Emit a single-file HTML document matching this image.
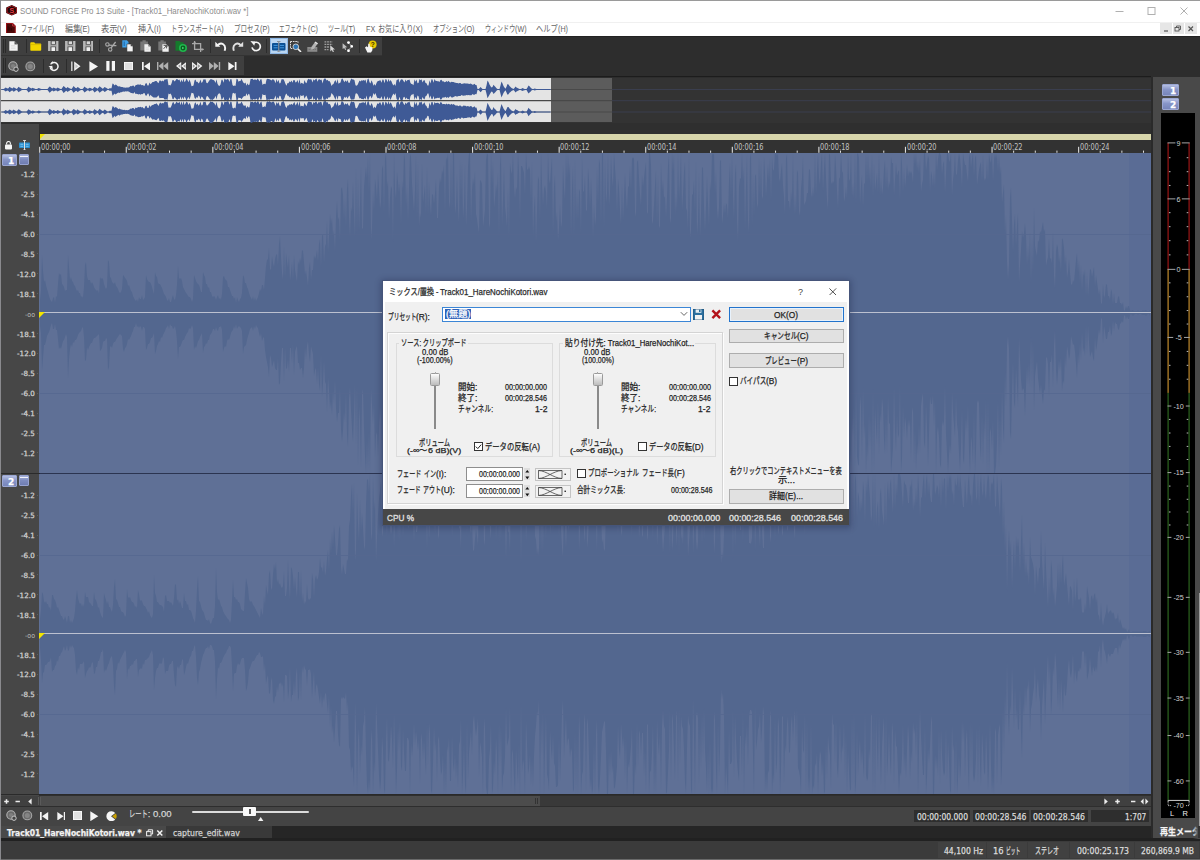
<!DOCTYPE html>
<html lang="ja"><head><meta charset="utf-8"><title>SOUND FORGE Pro 13 Suite</title>
<style>
html,body{margin:0;padding:0;background:#2d2d2d;}
#root{position:relative;width:1200px;height:860px;overflow:hidden;background:#2d2d2d;font-family:"Liberation Sans","Noto Sans CJK JP",sans-serif;}
.b{position:absolute;box-sizing:border-box;display:block;}
.t{position:absolute;white-space:pre;display:block;-webkit-text-stroke:0.25px;}
.r{display:inline-block;transform-origin:0 50%;white-space:pre;}

</style></head>
<body>
<div id="root">
<div class="b" style="left:0px;top:0px;width:1200px;height:36px;background:#ffffff;"></div>
<div class="b" style="left:0px;top:0px;width:1200px;height:1px;background:#9a9a9a;"></div>
<div class="b" style="left:0px;top:22px;width:1200px;height:1px;background:#f0f0f0;"></div>
<svg class="b" style="left:5.5px;top:5.3px;" width="11.5" height="10.6" viewBox="0 0 11.5 10.6"><polygon points="5.75,0 11.3,2.6 11.3,8 5.75,10.6 0.2,8 0.2,2.6" fill="#1c0606"/><polygon points="5.75,0.9 10.4,3.1 10.4,7.5 5.75,9.7 1.1,7.5 1.1,3.1" fill="none" stroke="#b81820" stroke-width="0.9"/><text x="5.75" y="7.9" font-size="7" font-weight="bold" text-anchor="middle" fill="#e83a44" font-family="Liberation Sans, sans-serif">S</text></svg>
<span class="t" style='font:normal 9px/12px "Liberation Sans", "Noto Sans CJK JP", sans-serif;color:#8c8c8c;top:5.00px;left:19.50px;transform-origin:0 50%;transform:scaleX(0.8796);-webkit-text-stroke:0;'>SOUND FORGE Pro 13 Suite - [Track01_HareNochiKotori.wav *]</span>
<svg class="b" style="left:1110px;top:5px;" width="80" height="12" viewBox="0 0 80 12"><path d="M5.5 6.5h8" stroke="#b0b0b0" stroke-width="1" fill="none"/><rect x="38" y="2.5" width="7" height="7" fill="none" stroke="#b0b0b0" stroke-width="1"/><path d="M70.5 2.5l7 7M77.5 2.5l-7 7" stroke="#b0b0b0" stroke-width="1" fill="none"/></svg>
<svg class="b" style="left:6px;top:22.5px;" width="9.6" height="10.8" viewBox="0 0 9.6 10.8"><path d="M0 0h6.8l2.8 2.8v8h-9.6z" fill="#4c0909"/><path d="M0.4 0.4h6.2l2.6 2.6v7.4h-8.8z" fill="none" stroke="#b8141c" stroke-width="0.8"/><path d="M6.6 0.4v2.6h2.6" fill="none" stroke="#e04048" stroke-width="0.7"/><path d="M2.2 3.2v4.6M3.8 4.4v3.4M5.4 5.2v2.6" stroke="#2a0404" stroke-width="0.9"/></svg>
<span class="t" style='font:normal 9px/12px "Liberation Sans", "Noto Sans CJK JP", sans-serif;color:#646464;top:22.50px;left:21.30px;transform-origin:0 50%;-webkit-text-stroke:0;'><span class="r" style="transform:scaleX(0.6580);margin-right:-12.32px">ファイル</span><span class="r" style="transform:scaleX(0.8000);margin-right:-2.30px">(F)</span></span>
<span class="t" style='font:normal 9px/12px "Liberation Sans", "Noto Sans CJK JP", sans-serif;color:#646464;top:22.50px;left:64.50px;transform-origin:0 50%;-webkit-text-stroke:0;'><span class="r" style="transform:scaleX(0.8826);margin-right:-2.12px">編集</span><span class="r" style="transform:scaleX(0.8000);margin-right:-2.40px">(E)</span></span>
<span class="t" style='font:normal 9px/12px "Liberation Sans", "Noto Sans CJK JP", sans-serif;color:#646464;top:22.50px;left:100.80px;transform-origin:0 50%;-webkit-text-stroke:0;'><span class="r" style="transform:scaleX(0.9214);margin-right:-1.42px">表示</span><span class="r" style="transform:scaleX(0.8000);margin-right:-2.40px">(V)</span></span>
<span class="t" style='font:normal 9px/12px "Liberation Sans", "Noto Sans CJK JP", sans-serif;color:#646464;top:22.50px;left:137.80px;transform-origin:0 50%;-webkit-text-stroke:0;'><span class="r" style="transform:scaleX(0.8992);margin-right:-1.82px">挿入</span><span class="r" style="transform:scaleX(0.8000);margin-right:-1.70px">(I)</span></span>
<span class="t" style='font:normal 9px/12px "Liberation Sans", "Noto Sans CJK JP", sans-serif;color:#646464;top:22.50px;left:170.80px;transform-origin:0 50%;-webkit-text-stroke:0;'><span class="r" style="transform:scaleX(0.6828);margin-right:-19.93px">トランスポート</span><span class="r" style="transform:scaleX(0.8000);margin-right:-2.40px">(A)</span></span>
<span class="t" style='font:normal 9px/12px "Liberation Sans", "Noto Sans CJK JP", sans-serif;color:#646464;top:22.50px;left:233.80px;transform-origin:0 50%;-webkit-text-stroke:0;'><span class="r" style="transform:scaleX(0.7247);margin-right:-9.92px">プロセス</span><span class="r" style="transform:scaleX(0.8000);margin-right:-2.40px">(P)</span></span>
<span class="t" style='font:normal 9px/12px "Liberation Sans", "Noto Sans CJK JP", sans-serif;color:#646464;top:22.50px;left:279.30px;transform-origin:0 50%;-webkit-text-stroke:0;'><span class="r" style="transform:scaleX(0.6264);margin-right:-16.82px">エフェクト</span><span class="r" style="transform:scaleX(0.8000);margin-right:-2.50px">(C)</span></span>
<span class="t" style='font:normal 9px/12px "Liberation Sans", "Noto Sans CJK JP", sans-serif;color:#646464;top:22.50px;left:328.00px;transform-origin:0 50%;-webkit-text-stroke:0;'><span class="r" style="transform:scaleX(0.6774);margin-right:-8.72px">ツール</span><span class="r" style="transform:scaleX(0.8000);margin-right:-2.30px">(T)</span></span>
<span class="t" style='font:normal 9px/12px "Liberation Sans", "Noto Sans CJK JP", sans-serif;color:#646464;top:22.50px;left:366.30px;transform-origin:0 50%;-webkit-text-stroke:0;'><span class="r" style="transform:scaleX(0.8000);margin-right:-2.80px">FX </span><span class="r" style="transform:scaleX(0.7861);margin-right:-9.63px">お気に入り</span><span class="r" style="transform:scaleX(0.8000);margin-right:-2.40px">(X)</span></span>
<span class="t" style='font:normal 9px/12px "Liberation Sans", "Noto Sans CJK JP", sans-serif;color:#646464;top:22.50px;left:432.50px;transform-origin:0 50%;-webkit-text-stroke:0;'><span class="r" style="transform:scaleX(0.6975);margin-right:-13.62px">オプション</span><span class="r" style="transform:scaleX(0.8000);margin-right:-2.60px">(O)</span></span>
<span class="t" style='font:normal 9px/12px "Liberation Sans", "Noto Sans CJK JP", sans-serif;color:#646464;top:22.50px;left:484.50px;transform-origin:0 50%;-webkit-text-stroke:0;'><span class="r" style="transform:scaleX(0.6709);margin-right:-14.82px">ウィンドウ</span><span class="r" style="transform:scaleX(0.8000);margin-right:-2.90px">(W)</span></span>
<span class="t" style='font:normal 9px/12px "Liberation Sans", "Noto Sans CJK JP", sans-serif;color:#646464;top:22.50px;left:536.30px;transform-origin:0 50%;-webkit-text-stroke:0;'><span class="r" style="transform:scaleX(0.8032);margin-right:-5.32px">ヘルプ</span><span class="r" style="transform:scaleX(0.8000);margin-right:-2.50px">(H)</span></span>
<div class="b" style="left:1160px;top:23px;width:11.5px;height:11px;background:#e6e6e6;"></div>
<div class="b" style="left:1172.5px;top:23px;width:11.5px;height:11px;background:#e6e6e6;"></div>
<div class="b" style="left:1185px;top:23px;width:11.5px;height:11px;background:#e6e6e6;"></div>
<svg class="b" style="left:1160px;top:23px;" width="37" height="11" viewBox="0 0 37 11"><path d="M4 8h4" stroke="#555" stroke-width="1.2"/><rect x="15" y="4.5" width="4" height="3.5" fill="none" stroke="#555" stroke-width="0.9"/><path d="M16.5 4.5v-1.5h4v3.5h-1.5" fill="none" stroke="#555" stroke-width="0.9"/><path d="M28.5 3.5l4.5 4.5M33 3.5l-4.5 4.5" stroke="#555" stroke-width="1.2"/></svg>
<div class="b" style="left:0px;top:36px;width:1200px;height:42px;background:#2d2d2d;"></div>
<div class="b" style="left:0px;top:36px;width:1200px;height:1px;background:#222;"></div>
<div class="b" style="left:1px;top:37px;width:381px;height:17.5px;background:#3f3f3f;"></div>
<div class="b" style="left:1px;top:54.5px;width:381px;height:1.5px;background:#333;"></div>
<div class="b" style="left:1px;top:56.3px;width:243px;height:18.4px;background:#3f3f3f;"></div>
<div class="b" style="left:1px;top:75.6px;width:1150px;height:1.9px;background:#1c1c1c;"></div>
<div class="b" style="left:2.5px;top:38.5px;width:1px;height:14.5px;background:#2a2a2a;"></div>
<div class="b" style="left:4.5px;top:38.5px;width:1px;height:14.5px;background:#2a2a2a;"></div>
<div class="b" style="left:2.5px;top:58px;width:1px;height:14.5px;background:#2a2a2a;"></div>
<div class="b" style="left:4.5px;top:58px;width:1px;height:14.5px;background:#2a2a2a;"></div>
<div class="b" style="left:26px;top:39px;width:1px;height:14px;background:#2c2c2c;"></div>
<div class="b" style="left:99px;top:39px;width:1px;height:14px;background:#2c2c2c;"></div>
<div class="b" style="left:209.5px;top:39px;width:1px;height:14px;background:#2c2c2c;"></div>
<div class="b" style="left:266px;top:39px;width:1px;height:14px;background:#2c2c2c;"></div>
<div class="b" style="left:359px;top:39px;width:1px;height:14px;background:#2c2c2c;"></div>
<div class="b" style="left:42.5px;top:59px;width:1px;height:14px;background:#2c2c2c;"></div>
<div class="b" style="left:65.5px;top:59px;width:1px;height:14px;background:#2c2c2c;"></div>
<svg class="b" style="left:9px;top:41px;" width="9" height="10" viewBox="0 0 9 10"><path d="M0.3 0.3h5.4l3 3v6.4h-8.4z" fill="#f4f4f4"/><path d="M5.7 0.3v3h3" fill="#555" stroke="#555" stroke-width="0.3"/><path d="M2 4.5h4M2 6h4.5M2 7.5h4.5" stroke="#d5d5d5" stroke-width="0.6"/></svg>
<svg class="b" style="left:30px;top:41.5px;" width="11.5" height="9" viewBox="0 0 11.5 9"><path d="M0.3 1.2q0-0.9 0.9-0.9h3l1 1.2h5.2q0.8 0 0.8 0.8v5.6q0 0.8-0.8 0.8h-9.3q-0.8 0-0.8-0.8z" fill="#f2d600"/><path d="M0.3 2.6h10.9" stroke="#c9ad00" stroke-width="0.6"/></svg>
<svg class="b" style="left:48px;top:41px;" width="10.5" height="10" viewBox="0 0 10.5 10"><rect x="0" y="0" width="10.5" height="10" fill="#a8a8a8"/><rect x="2.8" y="0" width="5" height="3.6" fill="#3d3d3d"/><rect x="3.6" y="0.3" width="3.4" height="2.8" fill="#d8d8d8"/><rect x="2.6" y="5.6" width="5.4" height="4.4" fill="#3d3d3d"/><rect x="3.4" y="6.2" width="3.8" height="3.8" fill="#f0f0f0"/><path d="M1.2 0v10M9.3 0v10" stroke="#c8c8c8" stroke-width="0.7"/></svg>
<svg class="b" style="left:65px;top:41px;" width="10.5" height="10" viewBox="0 0 10.5 10"><rect x="0" y="0" width="10.5" height="10" fill="#a8a8a8"/><rect x="2.8" y="0" width="5" height="3.6" fill="#3d3d3d"/><rect x="3.6" y="0.3" width="3.4" height="2.8" fill="#d8d8d8"/><rect x="2.6" y="5.6" width="5.4" height="4.4" fill="#3d3d3d"/><rect x="3.4" y="6.2" width="3.8" height="3.8" fill="#f0f0f0"/><path d="M1.2 0v10M9.3 0v10" stroke="#c8c8c8" stroke-width="0.7"/></svg>
<svg class="b" style="left:82.5px;top:41px;" width="10.5" height="10" viewBox="0 0 10.5 10"><rect x="0" y="0" width="10.5" height="10" fill="#a8a8a8"/><rect x="2.8" y="0" width="5" height="3.6" fill="#3d3d3d"/><rect x="3.6" y="0.3" width="3.4" height="2.8" fill="#d8d8d8"/><rect x="2.6" y="5.6" width="5.4" height="4.4" fill="#3d3d3d"/><rect x="3.4" y="6.2" width="3.8" height="3.8" fill="#f0f0f0"/><path d="M1.2 0v10M9.3 0v10" stroke="#c8c8c8" stroke-width="0.7"/></svg>
<svg class="b" style="left:105px;top:40.5px;" width="12" height="11" viewBox="0 0 12 11"><g stroke="#a8a8a8" fill="none"><circle cx="2.4" cy="3.4" r="1.7" stroke-width="1.1"/><circle cx="5.2" cy="8.4" r="1.7" stroke-width="1.1"/><path d="M3.8 4.2l7.6 0.4M6 7l4.6-6" stroke-width="1.3"/></g></svg>
<svg class="b" style="left:122px;top:40px;" width="12" height="12" viewBox="0 0 12 12"><path d="M0.3 0.3h4.6l1.6 1.6v5.6h-6.2z" fill="#3fa0e8"/><path d="M2.2 1.5v4.5" stroke="#1c5c9a" stroke-width="0.9"/><path d="M4.9 4h3.8l2.3 2.3v5.4h-6.1z" fill="#f4f4f4" stroke="#222" stroke-width="0.5"/><path d="M8.7 4v2.3h2.3" fill="#444"/></svg>
<svg class="b" style="left:140px;top:40px;" width="11" height="12" viewBox="0 0 11 12"><path d="M0.3 1.5h2.2v-1.2h3.2v1.2h2.2v9h-7.6z" fill="#777"/><path d="M4.4 4.2h4l2.3 2.3v5.2h-6.3z" fill="#f0f0f0"/><path d="M8.4 4.2v2.3h2.3" fill="#666"/><path d="M5.6 8h3.5M5.6 9.6h3.5" stroke="#d0d0d0" stroke-width="0.6"/></svg>
<svg class="b" style="left:157.5px;top:40px;" width="11" height="12" viewBox="0 0 11 12"><path d="M0.3 1.5h2.2v-1.2h3.2v1.2h2.2v9h-7.6z" fill="#777"/><path d="M4.4 4.2h4l2.3 2.3v5.2h-6.3z" fill="#f0f0f0"/><path d="M8.4 4.2v2.3h2.3" fill="#666"/><path d="M5.6 5.4h3v3M8.6 5.4l-3 3.4" stroke="#555" stroke-width="1" fill="none"/></svg>
<svg class="b" style="left:175px;top:40px;" width="12.5" height="12.5" viewBox="0 0 12.5 12.5"><path d="M0.5 1h4l1 1.2h3v8.5h-8z" fill="#157a2c"/><circle cx="8" cy="8" r="4" fill="#1fb64c"/><circle cx="8" cy="8" r="2.4" fill="#0d5a20"/><path d="M7.2 6.7v2.6l2.1-1.3z" fill="#49e57b"/></svg>
<svg class="b" style="left:192px;top:40.5px;" width="12" height="11.5" viewBox="0 0 12 11.5"><path d="M2.6 0v8.4h9M0 2.6h8.6v8.6" stroke="#a8a8a8" stroke-width="1.3" fill="none"/><path d="M9.6 6.9l2.2 1.5-2.2 1.5z" fill="#a8a8a8"/><path d="M1.1 2.2l1.5-2 1.5 2z" fill="#a8a8a8"/></svg>
<svg class="b" style="left:215px;top:40.5px;" width="11.5" height="11" viewBox="0 0 11.5 11"><path d="M0.3 0.8v5h5z" fill="#f4f4f4"/><path d="M2.6 4.4q2.6-3 5.6-1.2q3 2.2 1.4 6.6" stroke="#f4f4f4" stroke-width="1.9" fill="none"/></svg>
<svg class="b" style="left:232px;top:40.5px;" width="11.5" height="11" viewBox="0 0 11.5 11"><path d="M11.2 0.8v5h-5z" fill="#e0e0e0"/><path d="M8.9 4.4q-2.6-3-5.6-1.2q-3 2.2-1.4 6.6" stroke="#e0e0e0" stroke-width="1.9" fill="none"/></svg>
<svg class="b" style="left:249.5px;top:40px;" width="12" height="12" viewBox="0 0 12 12"><path d="M3.2 3.4a4.2 4.2 0 1 1-1.2 4" stroke="#f4f4f4" stroke-width="1.7" fill="none"/><path d="M0.4 0.9l4.8 0.6-0.9 4.2z" fill="#f4f4f4"/></svg>
<div class="b" style="left:270px;top:38px;width:17.5px;height:16px;background:#b9d5f1;border:1px solid #8db6e4;"></div>
<svg class="b" style="left:272px;top:40.5px;" width="13.5" height="11.5" viewBox="0 0 13.5 11.5"><rect x="0" y="2" width="13.5" height="7.5" rx="1" fill="#0b4f93"/><path d="M1.6 4.4h4M1.6 6.8h4M8 4.4h4M8 6.8h4" stroke="#49a0e8" stroke-width="0.9"/><path d="M6.75 0.3v10.9M5 0.4h3.5M5 11.1h3.5" stroke="#8a9098" stroke-width="1.2" fill="none"/></svg>
<svg class="b" style="left:290px;top:40.5px;" width="11.5" height="11.5" viewBox="0 0 11.5 11.5"><path d="M0.5 0.5h7.5v2.2M0.5 0.5v7h2.2" stroke="#f4f4f4" stroke-width="0.9" fill="none" stroke-dasharray="1.6 0.8"/><circle cx="5.8" cy="5.8" r="2.8" fill="#2c74b5" stroke="#d8d8d8" stroke-width="0.9"/><path d="M7.9 7.9l3.1 3.1" stroke="#f4f4f4" stroke-width="1.5"/></svg>
<svg class="b" style="left:307px;top:40.5px;" width="11" height="11" viewBox="0 0 11 11"><path d="M0.3 6h10v4.8h-10z" fill="#8a8a8a"/><path d="M1.6 8.4h7.4" stroke="#6a6a6a" stroke-width="0.8" stroke-dasharray="1.4 0.7"/><path d="M4.4 6l3.6-5 2.6 1.8-3.6 5-2.9 0.9z" fill="#b4b4b4"/><path d="M8 1l2.6 1.8" stroke="#e8e8e8" stroke-width="1.2"/></svg>
<svg class="b" style="left:324px;top:40.5px;" width="11.5" height="11.5" viewBox="0 0 11.5 11.5"><path d="M0.5 0.8h8M0.5 3.4h8M0.5 6h5M0.5 8.6h4" stroke="#a0a0a0" stroke-width="1.3" stroke-dasharray="1.8 0.8" fill="none"/><path d="M6.2 4.2l4.8 4.2-2.1 0.2 1 2.2-1 0.5-1-2.2-1.6 1.3z" fill="#d4d4d4"/></svg>
<svg class="b" style="left:341.5px;top:40.5px;" width="11.5" height="11.5" viewBox="0 0 11.5 11.5"><path d="M6.5 1.6l3.2 3.6-3.2 4.3" stroke="#cfcfcf" stroke-width="0.9" fill="none" stroke-dasharray="1 0.8"/><circle cx="6.5" cy="1.6" r="1.4" fill="#fff"/><circle cx="9.7" cy="5.3" r="1.4" fill="#fff"/><circle cx="6.5" cy="9.7" r="1.4" fill="#fff"/><path d="M0.6 2.2l4.6 4-2 0.2 1 2.1-1 0.5-1-2.1-1.6 1.2z" fill="#c0c0c0"/></svg>
<svg class="b" style="left:364px;top:39.5px;" width="13" height="13" viewBox="0 0 13 13"><circle cx="8.6" cy="4.4" r="4" fill="#e8c800"/><text x="8.7" y="6.6" font-size="6.5" font-weight="bold" text-anchor="middle" fill="#3a3000" font-family="Liberation Sans, sans-serif">?</text><path d="M1 7.6l1.6-1.4 1.4 1 0.3-3.4 1.3 0 0.3 2.6 2.5 1 0 2.8-1.4 2.2h-3.6z" fill="#f6f6f6"/></svg>
<svg class="b" style="left:8px;top:60.5px;" width="11" height="11" viewBox="0 0 11 11"><circle cx="5" cy="5" r="4.2" fill="#6a6a6a" stroke="#b4b4b4" stroke-width="1.1"/><circle cx="5" cy="5" r="2.1" fill="#808080"/><circle cx="8" cy="8.2" r="2.2" fill="#3d3d3d" stroke="#c8c8c8" stroke-width="1"/></svg>
<svg class="b" style="left:25px;top:60.5px;" width="11" height="11" viewBox="0 0 11 11"><circle cx="5.3" cy="5.4" r="4.4" fill="#6a6a6a" stroke="#a4a4a4" stroke-width="1.1"/><circle cx="5.3" cy="5.4" r="2.5" fill="#858585"/></svg>
<svg class="b" style="left:47.5px;top:60px;" width="11.5" height="12" viewBox="0 0 11.5 12"><path d="M3.6 3.2a4 4 0 1 1-1.4 4.4" stroke="#f4f4f4" stroke-width="1.5" fill="none"/><path d="M0.5 6.2l3.8-0.4 0.6 3.6z" fill="#f4f4f4"/><path d="M2.6 4.4l2.4-2.6" stroke="#f4f4f4" stroke-width="1.4"/></svg>
<svg class="b" style="left:71px;top:61px;" width="10" height="10.5" viewBox="0 0 10 10.5"><path d="M0.8 0.6v9.3" stroke="#cfcfcf" stroke-width="1.5"/><path d="M3.2 0.4l6.3 4.85-6.3 4.85z" fill="#f4f4f4"/><path d="M4.4 3l2.9 2.25-2.9 2.25z" fill="#c4c4c4"/></svg>
<svg class="b" style="left:89px;top:60.8px;" width="9.5" height="11" viewBox="0 0 9.5 11"><path d="M0.4 0.3l8.6 5.2-8.6 5.2z" fill="#f4f4f4"/></svg>
<svg class="b" style="left:106px;top:61.3px;" width="9.5" height="9.8" viewBox="0 0 9.5 9.8"><rect x="0.3" y="0" width="3.2" height="9.8" fill="#f4f4f4"/><rect x="5.8" y="0" width="3.2" height="9.8" fill="#f4f4f4"/></svg>
<svg class="b" style="left:123.5px;top:61.8px;" width="9" height="8.6" viewBox="0 0 9 8.6"><rect x="0" y="0" width="9" height="8.6" fill="#f6f6f6"/><rect x="1" y="1" width="7" height="6.6" fill="#dedede"/></svg>
<svg class="b" style="left:141.5px;top:61.8px;" width="8.5" height="8.6" viewBox="0 0 8.5 8.6"><rect x="0" y="0" width="1.7" height="8.6" fill="#f4f4f4"/><path d="M8.2 0v8.6l-6.2-4.3z" fill="#f4f4f4"/></svg>
<svg class="b" style="left:157px;top:62px;" width="11.5" height="8.2" viewBox="0 0 11.5 8.2"><rect x="0" y="0" width="1.4" height="8.2" fill="#b0b0b0"/><path d="M6.4 0v8.2l-4.8-4.1zM11.2 0v8.2l-4.8-4.1z" fill="#b0b0b0"/></svg>
<svg class="b" style="left:175.5px;top:62px;" width="10.5" height="8.2" viewBox="0 0 10.5 8.2"><path d="M5.2 0v8.2l-5.2-4.1zM10.4 0v8.2l-5.2-4.1z" fill="#f4f4f4"/><path d="M4.4 2.2v3.8l-2.4-1.9zM9.6 2.2v3.8l-2.4-1.9z" fill="#999"/></svg>
<svg class="b" style="left:192px;top:62px;" width="10.5" height="8.2" viewBox="0 0 10.5 8.2"><path d="M0 0v8.2l5.2-4.1zM5.2 0v8.2l5.2-4.1z" fill="#f4f4f4"/><path d="M0.8 2.2v3.8l2.4-1.9zM6 2.2v3.8l2.4-1.9z" fill="#999"/></svg>
<svg class="b" style="left:209px;top:62px;" width="11.5" height="8.2" viewBox="0 0 11.5 8.2"><rect x="9.8" y="0" width="1.4" height="8.2" fill="#b0b0b0"/><path d="M0 0v8.2l4.8-4.1zM4.8 0v8.2l4.8-4.1z" fill="#b0b0b0"/></svg>
<svg class="b" style="left:228px;top:61.8px;" width="8.5" height="8.6" viewBox="0 0 8.5 8.6"><rect x="6.8" y="0" width="1.7" height="8.6" fill="#f4f4f4"/><path d="M0.3 0v8.6l6.2-4.3z" fill="#f4f4f4"/></svg>
<div class="b" style="left:1px;top:77.5px;width:1150px;height:45.5px;background:#333333;"></div>
<div class="b" style="left:1px;top:77.5px;width:550.3px;height:44.7px;background:#e4e4e4;"></div>
<div class="b" style="left:551.3px;top:77.5px;width:60.7px;height:44.7px;background:#5c5c5c;"></div>
<svg class="b" style="left:1px;top:77.5px;" width="1150" height="45" viewBox="0 0 1150 45"><path d="M611 11.5h539M611 34h539" stroke="#3a3e4e" stroke-width="1"/><path d="M550 11.5h61M550 34h61" stroke="#494949" stroke-width="1"/><path d="M0 11.5h550M0 34h550" stroke="#6a6a6a" stroke-width="0.8"/><polygon points="0.5,11.1 1.5,11.1 2.5,11.1 3.5,10.4 4.5,9.4 5.5,9.9 6.5,10.5 7.5,10.2 8.5,8.7 9.5,9.5 10.5,10.1 11.5,10.4 12.5,9.2 13.5,9.8 14.5,10.3 15.5,10.9 16.5,10.2 17.5,8.8 18.5,9.4 19.5,10.0 20.5,10.8 21.5,11.1 22.5,11.1 23.5,11.1 24.5,11.1 25.5,11.1 26.5,10.2 27.5,8.5 28.5,9.4 29.5,10.1 30.5,10.6 31.5,9.8 32.5,10.3 33.5,10.6 34.5,11.1 35.5,11.1 36.5,10.8 37.5,9.9 38.5,10.3 39.5,10.7 40.5,11.1 41.5,11.1 42.5,11.1 43.5,11.1 44.5,11.1 45.5,11.1 46.5,11.1 47.5,9.8 48.5,8.4 49.5,9.0 50.5,9.9 51.5,10.5 52.5,9.4 53.5,10.0 54.5,10.5 55.5,10.5 56.5,9.5 57.5,10.1 58.5,10.4 59.5,11.0 60.5,11.1 61.5,9.6 62.5,8.0 63.5,8.7 64.5,9.7 65.5,10.2 66.5,9.1 67.5,9.7 68.5,10.3 69.5,10.8 70.5,11.1 71.5,9.8 72.5,8.1 73.5,8.9 74.5,9.9 75.5,10.3 76.5,9.0 77.5,9.6 78.5,10.3 79.5,10.9 80.5,11.1 81.5,11.1 82.5,10.1 83.5,8.5 84.5,9.4 85.5,10.1 86.5,10.8 87.5,10.5 88.5,9.7 89.5,10.1 90.5,10.6 91.5,11.1 92.5,10.1 93.5,8.7 94.5,9.4 95.5,10.1 96.5,10.8 97.5,9.7 98.5,8.3 99.5,9.1 100.5,9.7 101.5,10.7 102.5,10.2 103.5,8.9 104.5,9.5 105.5,10.1 106.5,10.8 107.5,11.1 108.5,10.3 109.5,10.2 110.5,10.3 111.5,5.6 112.5,5.9 113.5,7.6 114.5,6.5 115.5,7.1 116.5,8.0 117.5,8.6 118.5,8.2 119.5,8.8 120.5,9.0 121.5,9.1 122.5,9.6 123.5,9.4 124.5,9.7 125.5,9.4 126.5,9.6 127.5,9.4 128.5,9.0 129.5,8.0 130.5,8.2 131.5,7.8 132.5,7.6 133.5,9.1 134.5,7.2 135.5,7.0 136.5,6.5 137.5,6.5 138.5,6.8 139.5,6.3 140.5,7.3 141.5,6.9 142.5,7.5 143.5,8.0 144.5,5.4 145.5,4.9 146.5,7.4 147.5,7.5 148.5,4.4 149.5,6.3 150.5,5.2 151.5,3.9 152.5,4.1 153.5,3.6 154.5,3.1 155.5,3.0 156.5,4.3 157.5,5.3 158.5,2.5 159.5,2.4 160.5,3.4 161.5,2.6 162.5,3.5 163.5,1.5 164.5,1.5 165.5,1.3 166.5,1.1 167.5,7.3 168.5,6.9 169.5,7.4 170.5,5.4 171.5,1.9 172.5,1.9 173.5,3.6 174.5,2.5 175.5,0.9 176.5,1.3 177.5,2.2 178.5,1.5 179.5,4.5 180.5,1.5 181.5,4.2 182.5,0.5 183.5,4.2 184.5,3.1 185.5,0.6 186.5,2.3 187.5,4.3 188.5,1.5 189.5,4.3 190.5,8.3 191.5,7.9 192.5,7.6 193.5,2.6 194.5,1.4 195.5,4.0 196.5,3.7 197.5,5.6 198.5,4.3 199.5,1.4 200.5,5.1 201.5,4.0 202.5,1.2 203.5,1.5 204.5,1.2 205.5,4.9 206.5,5.2 207.5,3.8 208.5,2.3 209.5,1.2 210.5,1.3 211.5,1.8 212.5,1.9 213.5,2.8 214.5,5.0 215.5,1.2 216.5,5.8 217.5,7.4 218.5,8.1 219.5,6.6 220.5,1.8 221.5,1.7 222.5,4.8 223.5,0.5 224.5,1.4 225.5,1.8 226.5,0.9 227.5,1.4 228.5,4.0 229.5,1.0 230.5,1.2 231.5,7.0 232.5,8.0 233.5,7.4 234.5,7.9 235.5,0.8 236.5,0.9 237.5,3.8 238.5,3.1 239.5,3.0 240.5,0.7 241.5,2.9 242.5,4.7 243.5,5.4 244.5,4.4 245.5,7.8 246.5,5.3 247.5,7.2 248.5,6.6 249.5,1.3 250.5,1.0 251.5,0.7 252.5,1.9 253.5,1.6 254.5,1.4 255.5,2.3 256.5,0.4 257.5,1.6 258.5,3.5 259.5,1.2 260.5,1.2 261.5,7.0 262.5,6.1 263.5,5.8 264.5,6.3 265.5,1.4 266.5,0.7 267.5,1.0 268.5,1.2 269.5,1.7 270.5,2.6 271.5,1.3 272.5,1.4 273.5,2.5 274.5,5.3 275.5,1.0 276.5,4.3 277.5,1.8 278.5,5.4 279.5,4.9 280.5,1.3 281.5,1.2 282.5,1.2 283.5,3.2 284.5,6.1 285.5,7.8 286.5,5.1 287.5,5.3 288.5,3.2 289.5,4.3 290.5,2.6 291.5,4.7 292.5,2.1 293.5,2.0 294.5,4.5 295.5,4.1 296.5,2.0 297.5,5.4 298.5,1.1 299.5,5.9 300.5,4.8 301.5,5.2 302.5,6.2 303.5,2.0 304.5,4.5 305.5,5.3 306.5,2.1 307.5,0.8 308.5,1.4 309.5,1.3 310.5,1.4 311.5,4.6 312.5,1.2 313.5,2.4 314.5,1.3 315.5,0.6 316.5,3.8 317.5,1.5 318.5,1.2 319.5,1.9 320.5,1.6 321.5,5.4 322.5,1.8 323.5,0.4 324.5,0.6 325.5,2.5 326.5,1.7 327.5,3.3 328.5,3.0 329.5,4.8 330.5,8.0 331.5,6.6 332.5,5.9 333.5,3.5 334.5,1.9 335.5,5.3 336.5,1.1 337.5,5.7 338.5,4.9 339.5,4.5 340.5,0.9 341.5,0.6 342.5,2.4 343.5,4.2 344.5,2.3 345.5,3.9 346.5,2.1 347.5,4.7 348.5,5.1 349.5,2.2 350.5,0.6 351.5,1.5 352.5,1.5 353.5,2.3 354.5,7.3 355.5,7.7 356.5,7.1 357.5,4.7 358.5,2.6 359.5,3.5 360.5,2.2 361.5,2.8 362.5,2.1 363.5,2.7 364.5,1.6 365.5,5.8 366.5,1.3 367.5,0.5 368.5,4.2 369.5,5.6 370.5,2.2 371.5,4.4 372.5,7.8 373.5,6.1 374.5,7.8 375.5,4.9 376.5,3.2 377.5,3.0 378.5,2.5 379.5,2.2 380.5,4.7 381.5,1.6 382.5,1.7 383.5,5.2 384.5,1.1 385.5,1.5 386.5,4.3 387.5,0.7 388.5,3.8 389.5,1.9 390.5,3.6 391.5,6.0 392.5,7.4 393.5,5.9 394.5,8.0 395.5,2.2 396.5,1.8 397.5,0.8 398.5,4.8 399.5,2.0 400.5,1.2 401.5,1.4 402.5,3.0 403.5,4.5 404.5,1.6 405.5,3.5 406.5,2.0 407.5,2.0 408.5,1.6 409.5,5.1 410.5,6.0 411.5,6.3 412.5,7.2 413.5,1.3 414.5,3.8 415.5,1.6 416.5,5.2 417.5,4.9 418.5,0.9 419.5,2.3 420.5,1.2 421.5,4.4 422.5,2.5 423.5,2.0 424.5,5.1 425.5,5.3 426.5,7.6 427.5,7.5 428.5,2.3 429.5,5.6 430.5,1.3 431.5,1.5 432.5,4.8 433.5,0.9 434.5,2.7 435.5,2.9 436.5,3.2 437.5,3.2 438.5,3.9 439.5,1.9 440.5,1.7 441.5,3.5 442.5,3.2 443.5,4.2 444.5,4.0 445.5,3.0 446.5,3.9 447.5,2.8 448.5,3.9 449.5,4.6 450.5,3.7 451.5,4.1 452.5,3.9 453.5,4.4 454.5,4.7 455.5,5.0 456.5,4.9 457.5,5.6 458.5,4.9 459.5,5.1 460.5,6.0 461.5,5.7 462.5,5.5 463.5,5.2 464.5,5.5 465.5,5.5 466.5,5.5 467.5,5.7 468.5,6.1 469.5,5.5 470.5,6.0 471.5,6.7 472.5,6.6 473.5,5.8 474.5,7.0 475.5,7.1 476.5,11.1 477.5,11.1 478.5,10.2 479.5,8.9 480.5,9.9 481.5,11.0 482.5,11.1 483.5,11.1 484.5,11.1 485.5,7.5 486.5,2.4 487.5,4.1 488.5,6.5 489.5,8.2 490.5,9.5 491.5,9.1 492.5,6.8 493.5,8.1 494.5,8.9 495.5,10.3 496.5,11.0 497.5,11.1 498.5,11.1 499.5,7.4 500.5,3.4 501.5,5.5 502.5,7.9 503.5,9.5 504.5,10.8 505.5,8.8 506.5,5.9 507.5,6.5 508.5,7.9 509.5,9.1 510.5,9.9 511.5,10.6 512.5,11.1 513.5,10.1 514.5,8.5 515.5,9.5 516.5,9.9 517.5,10.6 518.5,11.0 519.5,11.0 520.5,10.7 521.5,9.9 522.5,10.4 523.5,10.9 524.5,11.1 525.5,11.1 526.5,9.5 527.5,7.4 528.5,8.3 529.5,9.4 530.5,10.4 531.5,11.1 532.5,10.9 533.5,10.4 534.5,10.8 535.5,11.1 536.5,11.1 537.5,11.1 538.5,11.1 539.5,11.1 540.5,11.1 541.5,11.1 542.5,11.1 543.5,11.1 544.5,11.1 545.5,11.1 546.5,11.1 547.5,11.1 548.5,11.1 549.5,11.1 549.5,11.9 548.5,11.9 547.5,11.9 546.5,11.9 545.5,11.9 544.5,11.9 543.5,11.9 542.5,11.9 541.5,11.9 540.5,11.9 539.5,11.9 538.5,11.9 537.5,11.9 536.5,11.9 535.5,11.9 534.5,12.2 533.5,12.6 532.5,12.1 531.5,11.9 530.5,12.6 529.5,13.7 528.5,14.6 527.5,15.6 526.5,13.7 525.5,11.9 524.5,11.9 523.5,12.2 522.5,12.6 521.5,13.1 520.5,12.4 519.5,11.9 518.5,12.0 517.5,12.4 516.5,13.1 515.5,13.5 514.5,14.6 513.5,13.0 512.5,11.9 511.5,12.5 510.5,13.1 509.5,13.9 508.5,14.8 507.5,16.3 506.5,16.8 505.5,14.4 504.5,12.2 503.5,13.5 502.5,14.9 501.5,17.2 500.5,19.5 499.5,15.8 498.5,11.9 497.5,11.9 496.5,12.0 495.5,12.8 494.5,13.9 493.5,14.9 492.5,16.0 491.5,13.9 490.5,13.4 489.5,15.0 488.5,16.8 487.5,18.4 486.5,20.2 485.5,15.8 484.5,11.9 483.5,11.9 482.5,11.9 481.5,12.0 480.5,13.2 479.5,14.3 478.5,12.9 477.5,11.9 476.5,11.9 475.5,16.2 474.5,15.9 473.5,16.8 472.5,16.8 471.5,16.0 470.5,17.3 469.5,17.2 468.5,17.2 467.5,17.1 466.5,17.2 465.5,17.1 464.5,17.4 463.5,17.6 462.5,17.7 461.5,17.5 460.5,17.0 459.5,18.0 458.5,18.1 457.5,17.9 456.5,18.5 455.5,18.4 454.5,18.1 453.5,18.6 452.5,18.9 451.5,19.4 450.5,19.6 449.5,18.3 448.5,18.8 447.5,19.9 446.5,19.1 445.5,20.1 444.5,18.8 443.5,19.4 442.5,19.5 441.5,19.6 440.5,21.3 439.5,21.8 438.5,19.6 437.5,20.1 436.5,19.8 435.5,20.2 434.5,20.2 433.5,21.6 432.5,18.1 431.5,21.2 430.5,20.9 429.5,17.4 428.5,20.4 427.5,15.4 426.5,15.4 425.5,17.8 424.5,18.3 423.5,21.5 422.5,20.8 421.5,18.9 420.5,22.3 419.5,20.9 418.5,22.3 417.5,18.3 416.5,17.6 415.5,21.5 414.5,18.8 413.5,21.9 412.5,15.7 411.5,16.4 410.5,16.7 409.5,18.2 408.5,22.2 407.5,21.0 406.5,21.3 405.5,19.6 404.5,21.4 403.5,18.7 402.5,19.3 401.5,22.2 400.5,21.9 399.5,21.9 398.5,18.8 397.5,22.2 396.5,22.0 395.5,20.8 394.5,15.0 393.5,17.2 392.5,15.5 391.5,17.3 390.5,19.4 389.5,22.0 388.5,19.3 387.5,21.9 386.5,18.5 385.5,21.3 384.5,21.8 383.5,17.8 382.5,21.7 381.5,21.4 380.5,18.3 379.5,20.6 378.5,20.4 377.5,20.0 376.5,20.3 375.5,18.3 374.5,15.0 373.5,17.1 372.5,15.0 371.5,18.6 370.5,20.6 369.5,17.7 368.5,18.8 367.5,21.8 366.5,21.8 365.5,17.6 364.5,21.6 363.5,20.0 362.5,21.4 361.5,21.0 360.5,21.0 359.5,20.0 358.5,20.4 357.5,18.1 356.5,16.1 355.5,15.3 354.5,15.7 353.5,20.9 352.5,21.4 351.5,21.5 350.5,21.8 349.5,20.7 348.5,17.4 347.5,18.7 346.5,20.8 345.5,18.5 344.5,20.0 343.5,18.7 342.5,21.3 341.5,22.4 340.5,22.1 339.5,18.0 338.5,18.3 337.5,17.8 336.5,22.0 335.5,17.5 334.5,21.9 333.5,19.8 332.5,17.4 331.5,16.2 330.5,15.0 329.5,18.7 328.5,19.6 327.5,19.2 326.5,21.2 325.5,20.2 324.5,21.7 323.5,21.8 322.5,21.8 321.5,17.2 320.5,21.9 319.5,21.6 318.5,21.7 317.5,22.0 316.5,19.4 315.5,22.4 314.5,22.3 313.5,20.6 312.5,22.1 311.5,18.0 310.5,21.3 309.5,21.0 308.5,21.8 307.5,22.0 306.5,20.5 305.5,17.6 304.5,18.8 303.5,20.8 302.5,17.1 301.5,17.8 300.5,18.0 299.5,16.9 298.5,22.1 297.5,17.5 296.5,21.4 295.5,19.0 294.5,18.8 293.5,21.6 292.5,20.2 291.5,18.8 290.5,20.4 289.5,18.5 288.5,19.4 287.5,17.7 286.5,17.7 285.5,15.4 284.5,16.8 283.5,20.1 282.5,21.8 281.5,22.1 280.5,21.6 279.5,18.0 278.5,17.8 277.5,21.0 276.5,19.0 275.5,22.1 274.5,17.5 273.5,20.3 272.5,21.6 271.5,21.3 270.5,20.9 269.5,20.9 268.5,21.8 267.5,21.5 266.5,21.7 265.5,22.3 264.5,16.8 263.5,17.1 262.5,16.9 261.5,16.0 260.5,21.5 259.5,21.7 258.5,18.7 257.5,21.8 256.5,21.9 255.5,20.4 254.5,21.6 253.5,21.4 252.5,21.1 251.5,21.9 250.5,21.4 249.5,21.8 248.5,16.6 247.5,15.7 246.5,17.9 245.5,15.2 244.5,18.2 243.5,18.0 242.5,18.4 241.5,19.7 240.5,21.3 239.5,19.9 238.5,20.0 237.5,19.5 236.5,22.3 235.5,22.5 234.5,15.0 233.5,15.7 232.5,14.8 231.5,15.6 230.5,22.1 229.5,22.1 228.5,19.3 227.5,22.4 226.5,22.5 225.5,21.6 224.5,22.3 223.5,22.4 222.5,18.8 221.5,21.1 220.5,21.7 219.5,16.4 218.5,15.3 217.5,15.7 216.5,17.2 215.5,21.6 214.5,17.7 213.5,20.3 212.5,20.9 211.5,21.9 210.5,21.6 209.5,21.8 208.5,20.8 207.5,19.2 206.5,18.0 205.5,18.5 204.5,22.3 203.5,21.7 202.5,21.1 201.5,19.2 200.5,18.4 199.5,21.6 198.5,18.5 197.5,17.4 196.5,20.1 195.5,19.1 194.5,21.0 193.5,19.8 192.5,15.4 191.5,15.0 190.5,14.7 189.5,18.5 188.5,21.5 187.5,18.7 186.5,20.5 185.5,22.7 184.5,19.9 183.5,18.5 182.5,21.5 181.5,18.7 180.5,21.7 179.5,18.4 178.5,21.4 177.5,20.4 176.5,21.7 175.5,21.6 174.5,20.2 173.5,19.0 172.5,21.3 171.5,21.0 170.5,17.2 169.5,15.5 168.5,16.2 167.5,15.4 166.5,22.0 165.5,21.3 164.5,21.5 163.5,21.4 162.5,20.0 161.5,19.9 160.5,20.1 159.5,20.1 158.5,20.2 157.5,17.3 156.5,18.4 155.5,19.6 154.5,19.6 153.5,19.6 152.5,19.4 151.5,18.8 150.5,17.9 149.5,16.7 148.5,18.8 147.5,15.6 146.5,15.7 145.5,17.8 144.5,17.5 143.5,15.0 142.5,15.2 141.5,16.2 140.5,16.0 139.5,16.8 138.5,16.1 137.5,16.6 136.5,16.1 135.5,15.8 134.5,16.0 133.5,13.9 132.5,15.4 131.5,15.3 130.5,14.9 129.5,14.8 128.5,14.0 127.5,13.5 126.5,13.2 125.5,13.5 124.5,13.2 123.5,13.7 122.5,13.4 121.5,13.8 120.5,14.2 119.5,14.3 118.5,14.9 117.5,14.5 116.5,15.0 115.5,15.7 114.5,16.4 113.5,15.4 112.5,16.8 111.5,17.7 110.5,12.8 109.5,12.8 108.5,12.7 107.5,11.9 106.5,12.1 105.5,12.8 104.5,13.5 103.5,14.0 102.5,12.7 101.5,12.4 100.5,13.2 99.5,14.1 98.5,14.7 97.5,13.2 96.5,12.2 95.5,13.0 94.5,13.7 93.5,14.4 92.5,12.9 91.5,12.0 90.5,12.4 89.5,12.8 88.5,13.4 87.5,12.4 86.5,12.2 85.5,12.9 84.5,13.7 83.5,14.5 82.5,13.0 81.5,11.9 80.5,11.9 79.5,12.2 78.5,12.7 77.5,13.4 76.5,14.0 75.5,12.7 74.5,13.1 73.5,14.0 72.5,14.8 71.5,13.2 70.5,11.9 69.5,12.1 68.5,12.7 67.5,13.3 66.5,14.1 65.5,12.7 64.5,13.2 63.5,14.2 62.5,15.0 61.5,13.3 60.5,11.9 59.5,12.0 58.5,12.5 57.5,12.9 56.5,13.5 55.5,12.5 54.5,12.5 53.5,13.1 52.5,13.6 51.5,12.5 50.5,13.1 49.5,14.0 48.5,14.8 47.5,13.2 46.5,11.9 45.5,11.9 44.5,11.9 43.5,11.9 42.5,11.9 41.5,11.9 40.5,11.9 39.5,12.2 38.5,12.6 37.5,13.1 36.5,12.2 35.5,11.9 34.5,11.9 33.5,12.4 32.5,12.7 31.5,13.2 30.5,12.3 29.5,12.9 28.5,13.7 27.5,14.4 26.5,12.9 25.5,11.9 24.5,11.9 23.5,11.9 22.5,11.9 21.5,11.9 20.5,12.2 19.5,12.9 18.5,13.6 17.5,14.2 16.5,12.8 15.5,12.1 14.5,12.6 13.5,13.3 12.5,13.7 11.5,12.6 10.5,12.8 9.5,13.6 8.5,14.3 7.5,12.9 6.5,12.5 5.5,12.9 4.5,13.5 3.5,12.5 2.5,11.9 1.5,11.9 0.5,11.9" fill="#3f5a96"/><polygon points="0.5,33.6 1.5,33.6 2.5,33.6 3.5,33.0 4.5,32.1 5.5,32.5 6.5,33.0 7.5,32.6 8.5,31.4 9.5,31.9 10.5,32.7 11.5,32.8 12.5,31.6 13.5,32.3 14.5,32.8 15.5,33.4 16.5,32.6 17.5,31.2 18.5,31.8 19.5,32.6 20.5,33.3 21.5,33.6 22.5,33.6 23.5,33.6 24.5,33.6 25.5,33.6 26.5,32.5 27.5,31.2 28.5,32.0 29.5,32.6 30.5,33.2 31.5,32.4 32.5,32.7 33.5,33.2 34.5,33.6 35.5,33.6 36.5,33.2 37.5,32.4 38.5,32.8 39.5,33.2 40.5,33.6 41.5,33.6 42.5,33.6 43.5,33.6 44.5,33.6 45.5,33.6 46.5,33.6 47.5,32.4 48.5,30.7 49.5,31.6 50.5,32.3 51.5,33.0 52.5,32.0 53.5,32.4 54.5,33.0 55.5,33.0 56.5,32.0 57.5,32.6 58.5,33.0 59.5,33.5 60.5,33.6 61.5,32.3 62.5,30.3 63.5,31.4 64.5,32.2 65.5,32.7 66.5,31.5 67.5,32.2 68.5,32.8 69.5,33.4 70.5,33.6 71.5,32.3 72.5,30.9 73.5,31.5 74.5,32.3 75.5,32.8 76.5,31.3 77.5,32.2 78.5,32.7 79.5,33.3 80.5,33.6 81.5,33.6 82.5,32.6 83.5,31.0 84.5,31.8 85.5,32.6 86.5,33.3 87.5,33.1 88.5,32.2 89.5,32.7 90.5,33.1 91.5,33.6 92.5,32.6 93.5,31.0 94.5,31.9 95.5,32.6 96.5,33.3 97.5,32.3 98.5,30.7 99.5,31.5 100.5,32.3 101.5,33.1 102.5,32.7 103.5,31.4 104.5,32.0 105.5,32.7 106.5,33.4 107.5,33.6 108.5,32.7 109.5,32.8 110.5,32.7 111.5,28.2 112.5,28.4 113.5,30.0 114.5,29.1 115.5,29.6 116.5,30.3 117.5,31.2 118.5,30.5 119.5,31.3 120.5,31.4 121.5,31.7 122.5,32.0 123.5,31.8 124.5,32.3 125.5,32.1 126.5,32.2 127.5,32.0 128.5,31.6 129.5,30.5 130.5,30.8 131.5,30.1 132.5,30.1 133.5,31.4 134.5,29.5 135.5,29.9 136.5,29.4 137.5,28.9 138.5,29.3 139.5,28.7 140.5,29.5 141.5,29.1 142.5,30.2 143.5,30.6 144.5,28.0 145.5,27.7 146.5,30.1 147.5,30.1 148.5,27.0 149.5,29.1 150.5,27.5 151.5,26.9 152.5,26.8 153.5,25.9 154.5,25.9 155.5,25.3 156.5,26.6 157.5,28.0 158.5,25.5 159.5,24.6 160.5,25.8 161.5,25.1 162.5,25.4 163.5,23.8 164.5,23.6 165.5,24.2 166.5,23.6 167.5,29.8 168.5,29.5 169.5,29.8 170.5,27.8 171.5,24.8 172.5,24.0 173.5,26.4 174.5,25.5 175.5,23.4 176.5,24.7 177.5,24.9 178.5,23.5 179.5,27.2 180.5,23.2 181.5,27.2 182.5,23.1 183.5,26.9 184.5,25.4 185.5,23.4 186.5,24.6 187.5,26.9 188.5,24.7 189.5,26.7 190.5,30.8 191.5,30.4 192.5,30.3 193.5,25.7 194.5,24.2 195.5,27.0 196.5,25.4 197.5,27.7 198.5,26.4 199.5,23.8 200.5,27.5 201.5,26.9 202.5,23.6 203.5,23.9 204.5,23.6 205.5,27.3 206.5,27.4 207.5,26.3 208.5,25.0 209.5,23.3 210.5,24.0 211.5,23.7 212.5,24.7 213.5,25.4 214.5,27.8 215.5,23.7 216.5,28.2 217.5,30.1 218.5,30.5 219.5,29.0 220.5,23.6 221.5,24.2 222.5,27.3 223.5,23.5 224.5,24.0 225.5,23.7 226.5,23.2 227.5,23.4 228.5,26.8 229.5,23.5 230.5,23.9 231.5,29.7 232.5,30.6 233.5,29.6 234.5,30.5 235.5,23.3 236.5,23.0 237.5,25.9 238.5,25.4 239.5,25.6 240.5,23.5 241.5,25.4 242.5,27.5 243.5,27.7 244.5,27.2 245.5,30.3 246.5,27.9 247.5,29.6 248.5,29.3 249.5,23.2 250.5,24.1 251.5,23.8 252.5,24.7 253.5,24.0 254.5,23.3 255.5,24.9 256.5,23.3 257.5,23.6 258.5,26.5 259.5,24.2 260.5,23.6 261.5,29.2 262.5,29.0 263.5,28.2 264.5,28.9 265.5,24.2 266.5,23.2 267.5,24.0 268.5,23.0 269.5,23.9 270.5,24.6 271.5,23.7 272.5,23.6 273.5,25.0 274.5,28.1 275.5,24.1 276.5,26.1 277.5,24.1 278.5,27.6 279.5,27.9 280.5,24.0 281.5,23.7 282.5,23.1 283.5,25.1 284.5,28.6 285.5,30.1 286.5,27.6 287.5,27.6 288.5,26.2 289.5,26.8 290.5,25.8 291.5,27.0 292.5,25.2 293.5,23.9 294.5,27.4 295.5,26.1 296.5,23.8 297.5,28.0 298.5,23.1 299.5,28.6 300.5,27.7 301.5,28.1 302.5,28.6 303.5,24.7 304.5,26.7 305.5,28.3 306.5,24.9 307.5,23.6 308.5,23.8 309.5,24.1 310.5,24.1 311.5,26.9 312.5,24.0 313.5,24.9 314.5,23.7 315.5,23.4 316.5,26.2 317.5,24.1 318.5,24.5 319.5,23.7 320.5,24.2 321.5,28.1 322.5,23.5 323.5,23.2 324.5,22.8 325.5,24.6 326.5,24.0 327.5,26.3 328.5,25.8 329.5,27.0 330.5,30.4 331.5,29.1 332.5,28.2 333.5,25.6 334.5,24.0 335.5,27.7 336.5,23.5 337.5,28.1 338.5,26.9 339.5,27.0 340.5,23.3 341.5,23.5 342.5,24.6 343.5,27.1 344.5,25.3 345.5,26.5 346.5,25.0 347.5,27.2 348.5,27.9 349.5,24.8 350.5,23.2 351.5,24.2 352.5,23.8 353.5,24.8 354.5,29.8 355.5,30.5 356.5,29.3 357.5,27.1 358.5,25.0 359.5,25.3 360.5,24.8 361.5,24.6 362.5,24.2 363.5,25.2 364.5,23.1 365.5,27.8 366.5,23.7 367.5,22.9 368.5,26.9 369.5,27.7 370.5,25.1 371.5,27.0 372.5,30.5 373.5,28.6 374.5,30.3 375.5,27.6 376.5,25.2 377.5,26.0 378.5,24.5 379.5,24.6 380.5,27.5 381.5,24.0 382.5,24.1 383.5,28.0 384.5,23.5 385.5,24.4 386.5,26.4 387.5,23.0 388.5,26.5 389.5,24.3 390.5,25.8 391.5,28.2 392.5,29.9 393.5,28.2 394.5,30.7 395.5,24.8 396.5,23.9 397.5,23.2 398.5,26.9 399.5,23.9 400.5,23.3 401.5,23.5 402.5,25.5 403.5,27.2 404.5,24.4 405.5,25.9 406.5,24.5 407.5,24.2 408.5,23.6 409.5,27.6 410.5,28.9 411.5,28.7 412.5,29.7 413.5,23.3 414.5,27.0 415.5,23.9 416.5,28.0 417.5,26.9 418.5,23.9 419.5,24.4 420.5,23.4 421.5,26.8 422.5,25.6 423.5,24.3 424.5,27.3 425.5,27.9 426.5,30.2 427.5,30.3 428.5,24.6 429.5,27.7 430.5,23.9 431.5,24.1 432.5,27.6 433.5,23.9 434.5,25.2 435.5,25.1 436.5,24.8 437.5,24.9 438.5,26.2 439.5,24.1 440.5,24.6 441.5,26.2 442.5,25.9 443.5,26.0 444.5,26.5 445.5,25.4 446.5,26.4 447.5,25.7 448.5,26.2 449.5,26.7 450.5,25.8 451.5,26.8 452.5,26.0 453.5,26.8 454.5,27.4 455.5,27.5 456.5,27.6 457.5,28.3 458.5,27.4 459.5,27.6 460.5,28.6 461.5,28.4 462.5,27.5 463.5,27.8 464.5,27.7 465.5,28.4 466.5,28.0 467.5,28.2 468.5,28.8 469.5,28.1 470.5,28.3 471.5,29.5 472.5,29.1 473.5,28.2 474.5,29.7 475.5,29.5 476.5,33.6 477.5,33.6 478.5,32.6 479.5,31.4 480.5,32.4 481.5,33.5 482.5,33.6 483.5,33.6 484.5,33.6 485.5,29.8 486.5,24.7 487.5,26.8 488.5,28.8 489.5,30.5 490.5,32.1 491.5,31.8 492.5,29.1 493.5,30.7 494.5,31.6 495.5,32.8 496.5,33.5 497.5,33.6 498.5,33.6 499.5,29.8 500.5,26.1 501.5,28.2 502.5,30.5 503.5,32.0 504.5,33.3 505.5,31.3 506.5,28.9 507.5,29.0 508.5,30.5 509.5,31.6 510.5,32.4 511.5,33.1 512.5,33.6 513.5,32.5 514.5,31.0 515.5,31.9 516.5,32.3 517.5,33.0 518.5,33.4 519.5,33.6 520.5,33.2 521.5,32.4 522.5,32.9 523.5,33.4 524.5,33.6 525.5,33.6 526.5,31.9 527.5,29.7 528.5,31.0 529.5,31.8 530.5,33.0 531.5,33.6 532.5,33.4 533.5,33.0 534.5,33.3 535.5,33.6 536.5,33.6 537.5,33.6 538.5,33.6 539.5,33.6 540.5,33.6 541.5,33.6 542.5,33.6 543.5,33.6 544.5,33.6 545.5,33.6 546.5,33.6 547.5,33.6 548.5,33.6 549.5,33.6 549.5,34.4 548.5,34.4 547.5,34.4 546.5,34.4 545.5,34.4 544.5,34.4 543.5,34.4 542.5,34.4 541.5,34.4 540.5,34.4 539.5,34.4 538.5,34.4 537.5,34.4 536.5,34.4 535.5,34.4 534.5,34.7 533.5,35.1 532.5,34.6 531.5,34.4 530.5,35.0 529.5,36.0 528.5,37.1 527.5,38.3 526.5,36.1 525.5,34.4 524.5,34.4 523.5,34.7 522.5,35.1 521.5,35.6 520.5,34.9 519.5,34.4 518.5,34.6 517.5,34.9 516.5,35.7 515.5,36.0 514.5,37.1 513.5,35.5 512.5,34.4 511.5,35.0 510.5,35.6 509.5,36.5 508.5,37.6 507.5,39.0 506.5,39.3 505.5,36.8 504.5,34.7 503.5,35.9 502.5,37.7 501.5,39.8 500.5,42.1 499.5,38.4 498.5,34.4 497.5,34.4 496.5,34.5 495.5,35.3 494.5,36.4 493.5,37.3 492.5,38.8 491.5,36.3 490.5,35.9 489.5,37.4 488.5,38.9 487.5,41.1 486.5,43.0 485.5,38.2 484.5,34.4 483.5,34.4 482.5,34.4 481.5,34.5 480.5,35.7 479.5,36.7 478.5,35.4 477.5,34.4 476.5,34.4 475.5,38.6 474.5,38.4 473.5,39.4 472.5,39.2 471.5,38.6 470.5,39.5 469.5,39.9 468.5,39.2 467.5,39.4 466.5,39.6 465.5,39.9 464.5,40.1 463.5,40.0 462.5,40.6 461.5,39.8 460.5,39.5 459.5,40.9 458.5,40.5 457.5,39.8 456.5,40.5 455.5,41.0 454.5,40.5 453.5,41.1 452.5,41.6 451.5,41.5 450.5,42.3 449.5,41.3 448.5,41.4 447.5,42.4 446.5,41.7 445.5,42.3 444.5,41.6 443.5,41.4 442.5,42.5 441.5,42.0 440.5,43.8 439.5,44.3 438.5,42.0 437.5,42.3 436.5,43.1 435.5,43.0 434.5,42.2 433.5,44.0 432.5,40.8 431.5,44.1 430.5,43.6 429.5,40.3 428.5,42.6 427.5,37.9 426.5,37.8 425.5,40.3 424.5,40.6 423.5,43.6 422.5,43.1 421.5,41.4 420.5,44.1 419.5,43.2 418.5,44.5 417.5,40.7 416.5,40.1 415.5,43.3 414.5,41.0 413.5,44.6 412.5,38.3 411.5,39.0 410.5,39.2 409.5,40.7 408.5,44.6 407.5,43.4 406.5,44.0 405.5,41.7 404.5,44.5 403.5,41.3 402.5,42.5 401.5,44.9 400.5,44.4 399.5,43.6 398.5,41.1 397.5,44.3 396.5,44.0 395.5,43.0 394.5,37.3 393.5,39.8 392.5,37.9 391.5,39.5 390.5,42.1 389.5,44.3 388.5,41.8 387.5,44.3 386.5,41.6 385.5,43.9 384.5,44.5 383.5,40.2 382.5,43.5 381.5,43.1 380.5,41.1 379.5,43.3 378.5,43.5 377.5,42.4 376.5,42.8 375.5,40.7 374.5,37.4 373.5,39.1 372.5,37.6 371.5,41.2 370.5,42.9 369.5,39.9 368.5,40.9 367.5,45.2 366.5,44.5 365.5,39.7 364.5,44.3 363.5,42.7 362.5,43.5 361.5,42.9 360.5,43.6 359.5,42.7 358.5,42.8 357.5,40.9 356.5,38.4 355.5,37.7 354.5,38.1 353.5,43.7 352.5,43.9 351.5,44.0 350.5,44.8 349.5,44.1 348.5,40.0 347.5,41.3 346.5,42.9 345.5,40.9 344.5,43.2 343.5,40.8 342.5,43.5 341.5,44.5 340.5,44.0 339.5,41.0 338.5,41.0 337.5,40.0 336.5,44.1 335.5,40.3 334.5,43.5 333.5,42.3 332.5,39.9 331.5,38.9 330.5,37.5 329.5,40.8 328.5,41.8 327.5,41.7 326.5,43.9 325.5,42.9 324.5,45.0 323.5,44.3 322.5,43.7 321.5,40.1 320.5,44.1 319.5,43.5 318.5,44.2 317.5,43.7 316.5,41.7 315.5,44.4 314.5,44.3 313.5,42.7 312.5,44.5 311.5,40.9 310.5,44.0 309.5,44.1 308.5,44.5 307.5,44.7 306.5,43.1 305.5,39.8 304.5,41.3 303.5,43.3 302.5,39.9 301.5,40.2 300.5,40.6 299.5,39.4 298.5,44.5 297.5,39.9 296.5,43.8 295.5,41.7 294.5,40.7 293.5,43.2 292.5,43.5 291.5,40.9 290.5,42.8 289.5,41.3 288.5,42.4 287.5,39.9 286.5,40.4 285.5,37.9 284.5,38.8 283.5,42.2 282.5,45.0 281.5,44.8 280.5,44.1 279.5,40.4 278.5,40.3 277.5,43.4 276.5,41.3 275.5,43.7 274.5,40.1 273.5,43.4 272.5,44.7 271.5,43.8 270.5,42.9 269.5,43.7 268.5,45.0 267.5,44.2 266.5,44.7 265.5,44.4 264.5,39.4 263.5,39.5 262.5,39.3 261.5,38.6 260.5,44.4 259.5,43.4 258.5,41.5 257.5,44.1 256.5,44.3 255.5,43.4 254.5,43.9 253.5,43.7 252.5,43.9 251.5,44.2 250.5,44.9 249.5,44.5 248.5,38.7 247.5,38.2 246.5,40.6 245.5,37.8 244.5,41.2 243.5,40.0 242.5,40.8 241.5,42.5 240.5,44.1 239.5,42.2 238.5,42.3 237.5,42.3 236.5,45.1 235.5,44.9 234.5,37.6 233.5,38.0 232.5,37.6 231.5,38.2 230.5,43.7 229.5,44.7 228.5,41.1 227.5,44.0 226.5,44.2 225.5,44.7 224.5,44.0 223.5,45.1 222.5,41.3 221.5,43.6 220.5,43.5 219.5,38.8 218.5,37.6 217.5,38.1 216.5,39.7 215.5,44.5 214.5,40.1 213.5,42.3 212.5,43.5 211.5,44.4 210.5,44.9 209.5,45.2 208.5,43.8 207.5,42.5 206.5,40.6 205.5,40.7 204.5,43.8 203.5,44.6 202.5,44.6 201.5,41.6 200.5,40.6 199.5,44.1 198.5,41.5 197.5,40.4 196.5,42.4 195.5,41.4 194.5,44.4 193.5,43.0 192.5,37.7 191.5,37.8 190.5,37.1 189.5,40.7 188.5,43.5 187.5,41.2 186.5,42.5 185.5,45.0 184.5,42.1 183.5,41.0 182.5,44.7 181.5,40.8 180.5,44.2 179.5,40.9 178.5,43.8 177.5,43.1 176.5,43.4 175.5,44.7 174.5,42.6 173.5,41.6 172.5,43.6 171.5,43.7 170.5,39.8 169.5,38.0 168.5,38.5 167.5,37.9 166.5,43.7 165.5,44.0 164.5,44.3 163.5,43.6 162.5,42.2 161.5,43.1 160.5,42.2 159.5,42.9 158.5,43.1 157.5,39.8 156.5,41.1 155.5,42.3 154.5,41.9 153.5,41.6 152.5,41.2 151.5,41.8 150.5,40.6 149.5,38.9 148.5,40.7 147.5,37.9 146.5,38.0 145.5,40.7 144.5,40.2 143.5,37.3 142.5,38.0 141.5,38.5 140.5,38.3 139.5,39.1 138.5,38.9 137.5,39.2 136.5,38.7 135.5,38.3 134.5,38.4 133.5,36.5 132.5,38.1 131.5,37.7 130.5,37.4 129.5,37.3 128.5,36.4 127.5,36.0 126.5,35.7 125.5,36.1 124.5,35.7 123.5,36.1 122.5,35.9 121.5,36.4 120.5,36.6 119.5,36.8 118.5,37.7 117.5,36.7 116.5,37.6 115.5,38.1 114.5,39.1 113.5,37.8 112.5,39.3 111.5,40.0 110.5,35.3 109.5,35.3 108.5,35.2 107.5,34.4 106.5,34.6 105.5,35.4 104.5,36.0 103.5,36.5 102.5,35.3 101.5,34.8 100.5,35.6 99.5,36.4 98.5,37.3 97.5,35.7 96.5,34.7 95.5,35.4 94.5,36.3 93.5,36.9 92.5,35.4 91.5,34.5 90.5,34.9 89.5,35.4 88.5,35.9 87.5,34.9 86.5,34.7 85.5,35.5 84.5,36.0 83.5,36.8 82.5,35.5 81.5,34.4 80.5,34.4 79.5,34.6 78.5,35.3 77.5,36.0 76.5,36.5 75.5,35.3 74.5,35.7 73.5,36.6 72.5,37.2 71.5,35.7 70.5,34.4 69.5,34.7 68.5,35.2 67.5,35.8 66.5,36.5 65.5,35.2 64.5,35.8 63.5,36.6 62.5,37.5 61.5,35.9 60.5,34.4 59.5,34.5 58.5,35.0 57.5,35.5 56.5,36.0 55.5,35.0 54.5,35.1 53.5,35.5 52.5,36.0 51.5,35.1 50.5,35.6 49.5,36.6 48.5,37.3 47.5,35.7 46.5,34.4 45.5,34.4 44.5,34.4 43.5,34.4 42.5,34.4 41.5,34.4 40.5,34.4 39.5,34.8 38.5,35.2 37.5,35.6 36.5,34.8 35.5,34.4 34.5,34.4 33.5,34.8 32.5,35.3 31.5,35.7 30.5,34.9 29.5,35.4 28.5,36.1 27.5,36.9 26.5,35.4 25.5,34.4 24.5,34.4 23.5,34.4 22.5,34.4 21.5,34.4 20.5,34.7 19.5,35.4 18.5,36.1 17.5,36.7 16.5,35.4 15.5,34.6 14.5,35.2 13.5,35.7 12.5,36.3 11.5,35.1 10.5,35.3 9.5,36.0 8.5,36.6 7.5,35.4 6.5,35.0 5.5,35.5 4.5,36.0 3.5,35.0 2.5,34.4 1.5,34.4 0.5,34.4" fill="#3f5a96"/><path d="M0 22.7h611" stroke="#484848" stroke-width="1.2"/><path d="M611 22.7h539" stroke="#3a3e4e" stroke-width="1"/></svg>
<div class="b" style="left:0px;top:123px;width:1153px;height:675px;background:#2f2f2f;"></div>
<div class="b" style="left:1px;top:124px;width:38px;height:672px;background:#474747;"></div>
<div class="b" style="left:40px;top:133.8px;width:1111px;height:6.2px;background:#d7d5aa;"></div>
<div class="b" style="left:39px;top:140px;width:1112px;height:0.6px;background:#222;"></div>
<svg class="b" style="left:40px;top:134px;" width="5" height="5" viewBox="0 0 5 5"><polygon points="0,0 5,0 0,5" fill="#f2e500"/></svg>
<div class="b" style="left:39px;top:140.2px;width:1112px;height:12.8px;background:#323232;"></div>
<div class="b" style="left:39px;top:153px;width:1112px;height:641px;background:#5f7096;"></div>
<div class="b" style="left:1129px;top:153px;width:22px;height:641px;background:#5a6c95;"></div>
<svg class="b" style="left:39.2px;top:140.2px;" width="1111.8" height="12.8" viewBox="0 0 1111.8 12.8"><rect x="0.00" y="6.8" width="1.1" height="6" fill="#dcdcdc"/><rect x="21.65" y="10.6" width="1" height="2.2" fill="#e0e0e0"/><rect x="43.30" y="10.6" width="1" height="2.2" fill="#e0e0e0"/><rect x="64.95" y="10.6" width="1" height="2.2" fill="#e0e0e0"/><rect x="86.60" y="6.8" width="1.1" height="6" fill="#dcdcdc"/><rect x="108.25" y="10.6" width="1" height="2.2" fill="#e0e0e0"/><rect x="129.90" y="10.6" width="1" height="2.2" fill="#e0e0e0"/><rect x="151.55" y="10.6" width="1" height="2.2" fill="#e0e0e0"/><rect x="173.20" y="6.8" width="1.1" height="6" fill="#dcdcdc"/><rect x="194.85" y="10.6" width="1" height="2.2" fill="#e0e0e0"/><rect x="216.50" y="10.6" width="1" height="2.2" fill="#e0e0e0"/><rect x="238.15" y="10.6" width="1" height="2.2" fill="#e0e0e0"/><rect x="259.80" y="6.8" width="1.1" height="6" fill="#dcdcdc"/><rect x="281.45" y="10.6" width="1" height="2.2" fill="#e0e0e0"/><rect x="303.10" y="10.6" width="1" height="2.2" fill="#e0e0e0"/><rect x="324.75" y="10.6" width="1" height="2.2" fill="#e0e0e0"/><rect x="346.40" y="6.8" width="1.1" height="6" fill="#dcdcdc"/><rect x="368.05" y="10.6" width="1" height="2.2" fill="#e0e0e0"/><rect x="389.70" y="10.6" width="1" height="2.2" fill="#e0e0e0"/><rect x="411.35" y="10.6" width="1" height="2.2" fill="#e0e0e0"/><rect x="433.00" y="6.8" width="1.1" height="6" fill="#dcdcdc"/><rect x="454.65" y="10.6" width="1" height="2.2" fill="#e0e0e0"/><rect x="476.30" y="10.6" width="1" height="2.2" fill="#e0e0e0"/><rect x="497.95" y="10.6" width="1" height="2.2" fill="#e0e0e0"/><rect x="519.60" y="6.8" width="1.1" height="6" fill="#dcdcdc"/><rect x="541.25" y="10.6" width="1" height="2.2" fill="#e0e0e0"/><rect x="562.90" y="10.6" width="1" height="2.2" fill="#e0e0e0"/><rect x="584.55" y="10.6" width="1" height="2.2" fill="#e0e0e0"/><rect x="606.20" y="6.8" width="1.1" height="6" fill="#dcdcdc"/><rect x="627.85" y="10.6" width="1" height="2.2" fill="#e0e0e0"/><rect x="649.50" y="10.6" width="1" height="2.2" fill="#e0e0e0"/><rect x="671.15" y="10.6" width="1" height="2.2" fill="#e0e0e0"/><rect x="692.80" y="6.8" width="1.1" height="6" fill="#dcdcdc"/><rect x="714.45" y="10.6" width="1" height="2.2" fill="#e0e0e0"/><rect x="736.10" y="10.6" width="1" height="2.2" fill="#e0e0e0"/><rect x="757.75" y="10.6" width="1" height="2.2" fill="#e0e0e0"/><rect x="779.40" y="6.8" width="1.1" height="6" fill="#dcdcdc"/><rect x="801.05" y="10.6" width="1" height="2.2" fill="#e0e0e0"/><rect x="822.70" y="10.6" width="1" height="2.2" fill="#e0e0e0"/><rect x="844.35" y="10.6" width="1" height="2.2" fill="#e0e0e0"/><rect x="866.00" y="6.8" width="1.1" height="6" fill="#dcdcdc"/><rect x="887.65" y="10.6" width="1" height="2.2" fill="#e0e0e0"/><rect x="909.30" y="10.6" width="1" height="2.2" fill="#e0e0e0"/><rect x="930.95" y="10.6" width="1" height="2.2" fill="#e0e0e0"/><rect x="952.60" y="6.8" width="1.1" height="6" fill="#dcdcdc"/><rect x="974.25" y="10.6" width="1" height="2.2" fill="#e0e0e0"/><rect x="995.90" y="10.6" width="1" height="2.2" fill="#e0e0e0"/><rect x="1017.55" y="10.6" width="1" height="2.2" fill="#e0e0e0"/><rect x="1039.20" y="6.8" width="1.1" height="6" fill="#dcdcdc"/><rect x="1060.85" y="10.6" width="1" height="2.2" fill="#e0e0e0"/><rect x="1082.50" y="10.6" width="1" height="2.2" fill="#e0e0e0"/><rect x="1104.15" y="10.6" width="1" height="2.2" fill="#e0e0e0"/></svg>
<span class="t" style='font:normal 8.5px/12px "DejaVu Sans Condensed", "DejaVu Sans", "Noto Sans CJK JP", sans-serif;color:#c2c2c2;top:141.30px;left:40.80px;transform-origin:0 50%;transform:scaleX(0.8590);-webkit-text-stroke:0;'>00:00:00</span>
<span class="t" style='font:normal 8.5px/12px "DejaVu Sans Condensed", "DejaVu Sans", "Noto Sans CJK JP", sans-serif;color:#c2c2c2;top:141.30px;left:127.40px;transform-origin:0 50%;transform:scaleX(0.8590);-webkit-text-stroke:0;'>00:00:02</span>
<span class="t" style='font:normal 8.5px/12px "DejaVu Sans Condensed", "DejaVu Sans", "Noto Sans CJK JP", sans-serif;color:#c2c2c2;top:141.30px;left:214.00px;transform-origin:0 50%;transform:scaleX(0.8590);-webkit-text-stroke:0;'>00:00:04</span>
<span class="t" style='font:normal 8.5px/12px "DejaVu Sans Condensed", "DejaVu Sans", "Noto Sans CJK JP", sans-serif;color:#c2c2c2;top:141.30px;left:300.60px;transform-origin:0 50%;transform:scaleX(0.8590);-webkit-text-stroke:0;'>00:00:06</span>
<span class="t" style='font:normal 8.5px/12px "DejaVu Sans Condensed", "DejaVu Sans", "Noto Sans CJK JP", sans-serif;color:#c2c2c2;top:141.30px;left:387.20px;transform-origin:0 50%;transform:scaleX(0.8590);-webkit-text-stroke:0;'>00:00:08</span>
<span class="t" style='font:normal 8.5px/12px "DejaVu Sans Condensed", "DejaVu Sans", "Noto Sans CJK JP", sans-serif;color:#c2c2c2;top:141.30px;left:473.80px;transform-origin:0 50%;transform:scaleX(0.8590);-webkit-text-stroke:0;'>00:00:10</span>
<span class="t" style='font:normal 8.5px/12px "DejaVu Sans Condensed", "DejaVu Sans", "Noto Sans CJK JP", sans-serif;color:#c2c2c2;top:141.30px;left:560.40px;transform-origin:0 50%;transform:scaleX(0.8590);-webkit-text-stroke:0;'>00:00:12</span>
<span class="t" style='font:normal 8.5px/12px "DejaVu Sans Condensed", "DejaVu Sans", "Noto Sans CJK JP", sans-serif;color:#c2c2c2;top:141.30px;left:647.00px;transform-origin:0 50%;transform:scaleX(0.8590);-webkit-text-stroke:0;'>00:00:14</span>
<span class="t" style='font:normal 8.5px/12px "DejaVu Sans Condensed", "DejaVu Sans", "Noto Sans CJK JP", sans-serif;color:#c2c2c2;top:141.30px;left:733.60px;transform-origin:0 50%;transform:scaleX(0.8590);-webkit-text-stroke:0;'>00:00:16</span>
<span class="t" style='font:normal 8.5px/12px "DejaVu Sans Condensed", "DejaVu Sans", "Noto Sans CJK JP", sans-serif;color:#c2c2c2;top:141.30px;left:820.20px;transform-origin:0 50%;transform:scaleX(0.8590);-webkit-text-stroke:0;'>00:00:18</span>
<span class="t" style='font:normal 8.5px/12px "DejaVu Sans Condensed", "DejaVu Sans", "Noto Sans CJK JP", sans-serif;color:#c2c2c2;top:141.30px;left:906.80px;transform-origin:0 50%;transform:scaleX(0.8590);-webkit-text-stroke:0;'>00:00:20</span>
<span class="t" style='font:normal 8.5px/12px "DejaVu Sans Condensed", "DejaVu Sans", "Noto Sans CJK JP", sans-serif;color:#c2c2c2;top:141.30px;left:993.40px;transform-origin:0 50%;transform:scaleX(0.8590);-webkit-text-stroke:0;'>00:00:22</span>
<span class="t" style='font:normal 8.5px/12px "DejaVu Sans Condensed", "DejaVu Sans", "Noto Sans CJK JP", sans-serif;color:#c2c2c2;top:141.30px;left:1080.00px;transform-origin:0 50%;transform:scaleX(0.8590);-webkit-text-stroke:0;'>00:00:24</span>
<svg class="b" style="left:40px;top:153px;" width="1111" height="641" viewBox="0 0 1111 641"><polygon points="0,147 1,138 2,102 3,118 4,129 5,127 6,132 7,136 8,139 9,143 10,146 11,148 12,149 13,145 14,144 15,150 16,143 17,144 18,131 19,120 20,122 21,121 22,131 23,132 24,134 25,138 26,137 27,137 28,102 29,114 30,127 31,124 32,128 33,129 34,132 35,133 36,136 37,138 38,137 39,140 40,140 41,144 42,143 43,145 44,134 45,112 46,109 47,123 48,127 49,127 50,127 51,131 52,129 53,131 54,134 55,136 56,137 57,138 58,137 59,141 60,124 61,126 62,125 63,126 64,131 65,134 66,136 67,134 68,107 69,109 70,124 71,125 72,129 73,130 74,131 75,129 76,133 77,134 78,136 79,139 80,140 81,139 82,136 83,122 84,123 85,125 86,126 87,128 88,133 89,132 90,135 91,138 92,139 93,143 94,145 95,147 96,148 97,146 98,149 99,144 100,146 101,146 102,142 103,147 104,146 105,144 106,122 107,126 108,128 109,129 110,129 111,131 112,134 113,138 114,141 115,119 116,123 117,124 118,130 119,131 120,131 121,133 122,135 123,138 124,141 125,142 126,144 127,147 128,148 129,145 130,149 131,149 132,145 133,142 134,146 135,147 136,142 137,132 138,113 139,125 140,126 141,125 142,128 143,134 144,136 145,138 146,140 147,141 148,143 149,144 150,144 151,146 152,149 153,146 154,122 155,125 156,128 157,130 158,131 159,132 160,135 161,139 162,139 163,119 164,122 165,124 166,131 167,131 168,135 169,134 170,139 171,139 172,143 173,144 174,143 175,144 176,147 177,144 178,142 179,146 180,145 181,147 182,141 183,124 184,123 185,126 186,127 187,128 188,134 189,134 190,137 191,140 192,143 193,143 194,146 195,144 196,150 197,144 198,147 199,149 200,146 201,145 202,140 203,122 204,124 205,130 206,130 207,134 208,136 209,140 210,143 211,145 212,147 213,143 214,148 215,144 216,148 217,146 218,144 219,140 220,136 221,138 222,132 223,132 224,137 225,125 226,113 227,107 228,106 229,95 230,116 231,117 232,103 233,110 234,114 235,106 236,102 237,101 238,113 239,91 240,83 241,104 242,120 243,127 244,94 245,126 246,100 247,108 248,115 249,102 250,128 251,120 252,109 253,128 254,102 255,117 256,123 257,129 258,108 259,112 260,105 261,109 262,97 263,98 264,109 265,122 266,117 267,125 268,133 269,115 270,109 271,127 272,117 273,117 274,102 275,106 276,103 277,97 278,109 279,91 280,86 281,115 282,83 283,81 284,110 285,93 286,91 287,68 288,100 289,82 290,61 291,71 292,65 293,83 294,77 295,99 296,64 297,48 298,67 299,64 300,88 301,36 302,34 303,42 304,68 305,45 306,75 307,36 308,26 309,65 310,85 311,54 312,59 313,29 314,60 315,85 316,16 317,82 318,26 319,79 320,52 321,14 322,75 323,76 324,34 325,23 326,14 327,26 328,3 329,40 330,0 331,87 332,75 333,38 334,59 335,26 336,33 337,47 338,19 339,35 340,56 341,49 342,16 343,12 344,62 345,6 346,0 347,34 348,28 349,68 350,45 351,33 352,36 353,89 354,0 355,37 356,46 357,19 358,29 359,40 360,29 361,73 362,28 363,38 364,0 365,7 366,54 367,32 368,70 369,35 370,0 371,4 372,30 373,45 374,59 375,37 376,3 377,67 378,9 379,74 380,60 381,65 382,10 383,50 384,41 385,32 386,62 387,14 388,63 389,29 390,50 391,63 392,41 393,42 394,51 395,41 396,26 397,65 398,65 399,34 400,25 401,30 402,17 403,21 404,12 405,63 406,4 407,8 408,0 409,49 410,56 411,6 412,59 413,0 414,0 415,61 416,53 417,21 418,56 419,70 420,7 421,46 422,9 423,66 424,52 425,12 426,74 427,55 428,14 429,0 430,0 431,70 432,37 433,25 434,32 435,18 436,61 437,66 438,74 439,80 440,27 441,28 442,31 443,74 444,66 445,57 446,7 447,0 448,2 449,71 450,75 451,0 452,34 453,8 454,55 455,46 456,31 457,39 458,20 459,86 460,12 461,0 462,74 463,47 464,14 465,54 466,63 467,74 468,35 469,87 470,10 471,18 472,21 473,1 474,34 475,46 476,34 477,37 478,0 479,19 480,69 481,13 482,13 483,16 484,20 485,43 486,0 487,16 488,17 489,13 490,17 491,51 492,9 493,85 494,55 495,42 496,91 497,58 498,23 499,27 500,68 501,0 502,31 503,53 504,36 505,32 506,39 507,57 508,0 509,26 510,31 511,16 512,4 513,84 514,34 515,22 516,69 517,59 518,88 519,75 520,51 521,75 522,69 523,12 524,35 525,47 526,0 527,28 528,1 529,23 530,10 531,85 532,36 533,13 534,87 535,7 536,70 537,36 538,69 539,36 540,39 541,82 542,3 543,38 544,39 545,23 546,58 547,57 548,15 549,27 550,55 551,25 552,48 553,86 554,52 555,73 556,64 557,14 558,52 559,6 560,11 561,73 562,0 563,0 564,79 565,6 566,50 567,41 568,0 569,53 570,40 571,3 572,25 573,34 574,0 575,15 576,29 577,61 578,26 579,35 580,57 581,72 582,31 583,68 584,45 585,20 586,42 587,57 588,34 589,33 590,13 591,38 592,6 593,4 594,6 595,59 596,64 597,9 598,7 599,25 600,42 601,53 602,22 603,34 604,25 605,16 606,9 607,61 608,59 609,0 610,0 611,12 612,71 613,68 614,52 615,33 616,17 617,73 618,22 619,75 620,73 621,10 622,39 623,27 624,45 625,43 626,65 627,45 628,13 629,1 630,71 631,65 632,0 633,19 634,2 635,63 636,41 637,59 638,0 639,47 640,26 641,0 642,58 643,42 644,19 645,9 646,55 647,58 648,77 649,0 650,85 651,77 652,42 653,41 654,27 655,60 656,9 657,82 658,69 659,20 660,85 661,62 662,14 663,15 664,54 665,79 666,53 667,23 668,51 669,74 670,29 671,38 672,0 673,2 674,0 675,42 676,17 677,56 678,67 679,54 680,8 681,7 682,71 683,63 684,50 685,61 686,50 687,52 688,66 689,28 690,10 691,44 692,2 693,43 694,67 695,21 696,11 697,67 698,89 699,34 700,25 701,26 702,0 703,29 704,14 705,78 706,34 707,2 708,67 709,80 710,5 711,0 712,74 713,21 714,64 715,23 716,21 717,51 718,55 719,4 720,43 721,8 722,46 723,43 724,4 725,20 726,44 727,26 728,11 729,28 730,5 731,49 732,4 733,18 734,16 735,0 736,0 737,3 738,0 739,25 740,29 741,18 742,10 743,33 744,44 745,62 746,6 747,1 748,48 749,48 750,58 751,37 752,48 753,1 754,63 755,42 756,62 757,17 758,20 759,58 760,63 761,36 762,25 763,4 764,52 765,50 766,48 767,40 768,40 769,16 770,17 771,39 772,45 773,34 774,44 775,0 776,42 777,18 778,0 779,25 780,32 781,10 782,0 783,39 784,16 785,0 786,25 787,47 788,57 789,0 790,2 791,29 792,31 793,28 794,30 795,1 796,14 797,38 798,56 799,26 800,24 801,0 802,18 803,20 804,49 805,44 806,34 807,46 808,0 809,26 810,28 811,0 812,44 813,30 814,46 815,0 816,52 817,1 818,0 819,5 820,52 821,33 822,22 823,55 824,30 825,31 826,0 827,30 828,0 829,29 830,13 831,37 832,2 833,45 834,11 835,38 836,29 837,20 838,41 839,0 840,43 841,25 842,42 843,35 844,16 845,7 846,37 847,13 848,38 849,28 850,33 851,4 852,10 853,10 854,43 855,27 856,10 857,23 858,19 859,17 860,48 861,0 862,11 863,40 864,15 865,35 866,25 867,11 868,24 869,17 870,21 871,18 872,21 873,30 874,0 875,12 876,0 877,18 878,8 879,21 880,5 881,39 882,31 883,27 884,0 885,0 886,18 887,10 888,2 889,6 890,40 891,18 892,23 893,34 894,18 895,36 896,0 897,18 898,6 899,0 900,0 901,3 902,22 903,11 904,8 905,41 906,21 907,0 908,0 909,7 910,9 911,0 912,43 913,27 914,18 915,0 916,22 917,21 918,7 919,0 920,5 921,17 922,35 923,0 924,7 925,12 926,12 927,22 928,29 929,5 930,0 931,15 932,6 933,0 934,24 935,5 936,2 937,32 938,25 939,17 940,12 941,9 942,29 943,2 944,28 945,25 946,27 947,6 948,29 949,0 950,7 951,10 952,1 953,29 954,7 955,0 956,6 957,0 958,20 959,0 960,22 961,13 962,50 963,40 964,31 965,83 966,62 967,109 968,127 969,111 970,45 971,34 972,68 973,100 974,72 975,61 976,94 977,73 978,60 979,130 980,113 981,97 982,78 983,85 984,80 985,70 986,83 987,113 988,93 989,109 990,79 991,131 992,83 993,121 994,55 995,93 996,99 997,103 998,87 999,89 1000,78 1001,80 1002,74 1003,69 1004,79 1005,76 1006,113 1007,108 1008,104 1009,85 1010,106 1011,105 1012,111 1013,79 1014,122 1015,136 1016,98 1017,91 1018,95 1019,110 1020,102 1021,120 1022,85 1023,87 1024,95 1025,113 1026,102 1027,125 1028,119 1029,106 1030,120 1031,131 1032,132 1033,127 1034,129 1035,118 1036,107 1037,100 1038,120 1039,107 1040,131 1041,112 1042,139 1043,118 1044,124 1045,116 1046,144 1047,119 1048,144 1049,131 1050,116 1051,117 1052,124 1053,119 1054,114 1055,134 1056,122 1057,129 1058,136 1059,142 1060,136 1061,150 1062,151 1063,131 1064,145 1065,142 1066,131 1067,132 1068,143 1069,143 1070,147 1071,136 1072,139 1073,152 1074,140 1075,150 1076,150 1077,150 1078,144 1079,143 1080,150 1081,150 1082,152 1083,149 1084,158 1085,157 1086,153 1087,156 1088,153 1089,153 1090,157 1091,158 1092,157 1093,157 1094,158 1095,158 1096,158 1097,158 1098,157 1099,158 1100,158 1101,158 1102,158 1103,157 1104,158 1105,157 1106,157 1107,158 1108,158 1109,158 1110,157 1110,163 1109,161 1108,161 1107,162 1106,163 1105,162 1104,162 1103,162 1102,162 1101,161 1100,161 1099,161 1098,162 1097,161 1096,161 1095,161 1094,162 1093,163 1092,162 1091,161 1090,162 1089,166 1088,166 1087,163 1086,167 1085,162 1084,163 1083,170 1082,168 1081,170 1080,171 1079,177 1078,176 1077,171 1076,171 1075,169 1074,178 1073,167 1072,180 1071,183 1070,172 1069,179 1068,179 1067,186 1066,186 1065,179 1064,173 1063,190 1062,165 1061,166 1060,182 1059,176 1058,184 1057,192 1056,198 1055,184 1054,208 1053,205 1052,198 1051,201 1050,204 1049,189 1048,172 1047,201 1046,171 1045,203 1044,194 1043,199 1042,178 1041,207 1040,189 1039,212 1038,200 1037,225 1036,211 1035,199 1034,191 1033,192 1032,187 1031,183 1030,201 1029,207 1028,198 1027,193 1026,215 1025,202 1024,231 1023,227 1022,238 1021,204 1020,218 1019,207 1018,219 1017,232 1016,217 1015,177 1014,193 1013,234 1012,201 1011,209 1010,209 1009,243 1008,211 1007,204 1006,205 1005,238 1004,236 1003,251 1002,243 1001,231 1000,241 999,233 998,225 997,208 996,215 995,223 994,257 993,187 992,235 991,183 990,234 989,209 988,231 987,213 986,233 985,263 984,237 983,235 982,238 981,226 980,206 979,184 978,254 977,232 976,214 975,255 974,249 973,207 972,240 971,286 970,279 969,196 968,183 967,192 966,253 965,218 964,290 963,275 962,236 961,302 960,262 959,314 958,246 957,288 956,313 955,320 954,320 953,266 952,296 951,279 950,275 949,320 948,243 947,320 946,245 945,286 944,266 943,311 942,259 941,308 940,294 939,250 938,247 937,250 936,297 935,320 934,257 933,311 932,290 931,283 930,320 929,298 928,251 927,279 926,264 925,282 924,311 923,305 922,255 921,293 920,318 919,300 918,279 917,271 916,243 915,284 914,272 913,259 912,238 911,301 910,291 909,302 908,320 907,300 906,281 905,232 904,268 903,273 902,267 901,315 900,311 899,284 898,273 897,280 896,320 895,246 894,273 893,242 892,251 891,251 890,243 889,281 888,313 887,273 886,250 885,295 884,289 883,240 882,245 881,253 880,300 879,271 878,302 877,290 876,317 875,276 874,310 873,254 872,259 871,307 870,266 869,274 868,266 867,287 866,271 865,264 864,284 863,251 862,305 861,319 860,231 859,281 858,285 857,261 856,298 855,277 854,232 853,295 852,309 851,320 850,270 849,271 848,242 847,300 846,262 845,301 844,286 843,254 842,245 841,269 840,260 839,301 838,246 837,291 836,273 835,254 834,317 833,234 832,320 831,264 830,297 829,260 828,308 827,290 826,320 825,270 824,285 823,233 822,307 821,253 820,243 819,313 818,311 817,303 816,235 815,313 814,252 813,284 812,263 811,320 810,296 809,278 808,317 807,254 806,268 805,248 804,253 803,298 802,306 801,301 800,265 799,270 798,233 797,251 796,291 795,320 794,254 793,291 792,292 791,276 790,303 789,317 788,240 787,258 786,288 785,311 784,278 783,273 782,307 781,320 780,255 779,289 778,310 777,289 776,271 775,313 774,251 773,261 772,258 771,253 770,286 769,310 768,264 767,261 766,250 765,244 764,234 763,320 762,279 761,271 760,234 759,250 758,318 757,285 756,241 755,258 754,241 753,320 752,255 751,276 750,257 749,243 748,260 747,320 746,312 745,238 744,264 743,273 742,314 741,298 740,271 739,293 738,312 737,305 736,300 735,318 734,303 733,293 732,318 731,262 730,316 729,304 728,300 727,274 726,276 725,304 724,320 723,267 722,257 721,293 720,278 719,292 718,254 717,247 716,292 715,310 714,238 713,295 712,229 711,315 710,305 709,233 708,230 707,314 706,278 705,237 704,303 703,299 702,314 701,287 700,290 699,277 698,220 697,256 696,320 695,308 694,234 693,272 692,312 691,270 690,295 689,281 688,246 687,257 686,267 685,266 684,266 683,252 682,241 681,320 680,320 679,257 678,249 677,256 676,297 675,260 674,309 673,320 672,315 671,288 670,289 669,238 668,265 667,295 666,261 665,239 664,246 663,305 662,297 661,255 660,236 659,282 658,243 657,226 656,310 655,251 654,300 653,279 652,293 651,230 650,233 649,320 648,236 647,258 646,273 645,320 644,301 643,280 642,255 641,320 640,301 639,263 638,320 637,253 636,271 635,255 634,315 633,298 632,307 631,243 630,235 629,313 628,311 627,260 626,250 625,270 624,268 623,293 622,296 621,301 620,249 619,238 618,284 617,248 616,284 615,276 614,263 613,236 612,237 611,320 610,311 609,320 608,259 607,254 606,314 605,293 604,299 603,296 602,301 601,257 600,268 599,304 598,303 597,320 596,246 595,265 594,308 593,320 592,320 591,278 590,315 589,278 588,300 587,263 586,276 585,297 584,280 583,254 582,289 581,249 580,258 579,274 578,302 577,252 576,285 575,310 574,320 573,282 572,294 571,320 570,289 569,255 568,320 567,288 566,277 565,320 564,244 563,309 562,320 561,245 560,314 559,320 558,279 557,312 556,249 555,233 554,252 553,230 552,269 551,308 550,267 549,292 548,294 547,261 546,259 545,282 544,280 543,264 542,317 541,238 540,283 539,273 538,241 537,275 536,251 535,319 534,237 533,309 532,294 531,241 530,309 529,282 528,318 527,280 526,320 525,280 524,283 523,312 522,248 521,240 520,273 519,250 518,228 517,271 516,257 515,302 514,291 513,233 512,320 511,308 510,290 509,298 508,320 507,260 506,282 505,290 504,292 503,257 502,298 501,320 500,256 499,285 498,290 497,260 496,223 495,274 494,257 493,233 492,307 491,268 490,315 489,297 488,290 487,304 486,320 485,264 484,302 483,308 482,313 481,320 480,260 479,318 478,320 477,273 476,293 475,264 474,282 473,310 472,304 471,311 470,315 469,227 468,274 467,248 466,249 465,271 464,308 463,276 462,254 461,320 460,299 459,232 458,290 457,269 456,275 455,281 454,263 453,294 452,275 451,318 450,234 449,237 448,320 447,320 446,320 445,256 444,249 443,251 442,283 441,278 440,283 439,236 438,241 437,250 436,248 435,310 434,287 433,311 432,275 431,251 430,316 429,320 428,298 427,263 426,235 425,288 424,276 423,251 422,312 421,269 420,309 419,251 418,264 417,299 416,253 415,245 414,320 413,320 412,252 411,315 410,263 409,268 408,307 407,312 406,308 405,261 404,317 403,288 402,312 401,291 400,291 399,302 398,253 397,253 396,294 395,279 394,268 393,275 392,281 391,260 390,259 389,291 388,252 387,311 386,248 385,288 384,273 383,265 382,289 381,257 380,249 379,233 378,302 377,254 376,320 375,291 374,254 373,262 372,280 371,312 370,319 369,280 368,245 367,279 366,257 365,320 364,320 363,280 362,276 361,244 360,292 359,271 358,284 357,312 356,263 355,283 354,320 353,236 352,296 351,272 350,279 349,246 348,283 347,288 346,320 345,307 344,250 343,320 342,320 341,265 340,253 339,275 338,303 337,279 336,282 335,304 334,251 333,271 332,252 331,235 330,320 329,278 328,319 327,286 326,320 325,303 324,274 323,236 322,242 321,314 320,267 319,253 318,312 317,231 316,291 315,230 314,261 313,289 312,276 311,256 310,234 309,246 308,294 307,281 306,239 305,269 304,258 303,277 302,289 301,276 300,234 299,260 298,260 297,269 296,255 295,226 294,251 293,237 292,262 291,248 290,256 289,237 288,224 287,259 286,231 285,229 284,207 283,230 282,244 281,200 280,238 279,231 278,214 277,231 276,215 275,217 274,223 273,201 272,197 271,193 270,209 269,202 268,188 267,193 266,206 265,194 264,215 263,225 262,215 261,215 260,217 259,210 258,210 257,193 256,195 255,199 254,222 253,190 252,210 251,195 250,195 249,219 248,206 247,215 246,216 245,193 244,228 243,195 242,195 241,209 240,230 239,232 238,205 237,217 236,217 235,215 234,207 233,211 232,214 231,205 230,202 229,224 228,214 227,209 226,204 225,197 224,184 223,185 222,188 221,180 220,184 219,180 218,175 217,174 216,172 215,176 214,173 213,178 212,174 211,175 210,176 209,180 208,183 207,187 206,192 205,193 204,194 203,201 202,178 201,175 200,174 199,173 198,174 197,176 196,171 195,176 194,173 193,177 192,178 191,180 190,184 189,187 188,186 187,188 186,194 185,193 184,195 183,199 182,177 181,173 180,174 179,174 178,178 177,177 176,174 175,178 174,176 173,176 172,179 171,181 170,182 169,187 168,187 167,191 166,190 165,193 164,194 163,200 162,180 161,182 160,184 159,187 158,188 157,192 156,195 155,193 154,197 153,175 152,172 151,175 150,176 149,175 148,179 147,180 146,182 145,184 144,187 143,187 142,189 141,192 140,194 139,194 138,206 137,188 136,178 135,173 134,175 133,176 132,173 131,173 130,171 129,176 128,172 127,174 126,175 125,178 124,180 123,182 122,185 121,184 120,189 119,188 118,191 117,193 116,198 115,201 114,180 113,183 112,185 111,185 110,189 109,191 108,191 107,195 106,197 105,176 104,174 103,174 102,178 101,174 100,173 99,175 98,173 97,174 96,170 95,174 94,174 93,178 92,180 91,183 90,185 89,187 88,186 87,191 86,194 85,195 84,199 83,196 82,183 81,182 80,181 79,182 78,184 77,185 76,187 75,189 74,189 73,191 72,195 71,193 70,194 69,214 68,217 67,186 66,185 65,188 64,188 63,189 62,195 61,197 60,198 59,181 58,182 57,183 56,184 55,185 54,185 53,187 52,190 51,190 50,192 49,194 48,197 47,194 46,207 45,208 44,184 43,174 42,175 41,178 40,179 39,180 38,182 37,185 36,187 35,187 34,190 33,189 32,194 31,191 30,196 29,206 28,225 27,184 26,181 25,184 24,187 23,188 22,192 21,196 20,194 19,196 18,186 17,177 16,177 15,171 14,176 13,176 12,170 11,172 10,176 9,179 8,181 7,183 6,188 5,192 4,192 3,205 2,218 1,180 0,173" fill="#53678f"/><polygon points="0,466 1,457 2,439 3,441 4,448 5,450 6,448 7,451 8,451 9,455 10,454 11,458 12,442 13,442 14,446 15,447 16,450 17,455 18,454 19,457 20,460 21,463 22,463 23,466 24,467 25,463 26,466 27,470 28,463 29,463 30,470 31,467 32,470 33,468 34,465 35,458 36,445 37,437 38,445 39,449 40,451 41,450 42,454 43,451 44,454 45,439 46,444 47,444 48,444 49,449 50,450 51,451 52,453 53,453 54,439 55,446 56,447 57,450 58,455 59,454 60,459 61,462 62,464 63,465 64,440 65,444 66,447 67,451 68,448 69,454 70,454 71,457 72,459 73,452 74,434 75,426 76,446 77,447 78,450 79,454 80,454 81,458 82,459 83,459 84,461 85,464 86,462 87,436 88,444 89,445 90,444 91,447 92,449 93,449 94,451 95,454 96,453 97,455 98,437 99,441 100,448 101,447 102,448 103,451 104,453 105,453 106,455 107,457 108,460 109,458 110,462 111,464 112,465 113,461 114,422 115,440 116,443 117,449 118,449 119,451 120,452 121,452 122,453 123,454 124,459 125,443 126,442 127,448 128,448 129,448 130,450 131,449 132,451 133,453 134,445 135,431 136,432 137,448 138,446 139,451 140,448 141,451 142,455 143,455 144,440 145,448 146,448 147,452 148,451 149,457 150,457 151,458 152,461 153,465 154,467 155,470 156,458 157,436 158,423 159,448 160,449 161,453 162,457 163,458 164,460 165,464 166,467 167,467 168,468 169,466 170,470 171,471 172,468 173,465 174,465 175,453 176,415 177,439 178,447 179,446 180,449 181,453 182,454 183,458 184,460 185,462 186,463 187,465 188,466 189,467 190,470 191,467 192,448 193,427 194,444 195,444 196,447 197,446 198,449 199,449 200,451 201,456 202,457 203,458 204,458 205,440 206,425 207,430 208,435 209,446 210,449 211,448 212,449 213,452 214,453 215,455 216,457 217,459 218,461 219,463 220,465 221,455 222,460 223,462 224,443 225,453 226,432 227,438 228,442 229,421 230,417 231,435 232,437 233,421 234,411 235,417 236,409 237,430 238,426 239,432 240,430 241,434 242,435 243,433 244,418 245,443 246,443 247,435 248,407 249,432 250,447 251,414 252,416 253,423 254,437 255,424 256,436 257,445 258,419 259,419 260,446 261,417 262,449 263,440 264,452 265,448 266,450 267,431 268,445 269,447 270,446 271,445 272,420 273,426 274,445 275,426 276,422 277,427 278,425 279,419 280,405 281,415 282,414 283,420 284,408 285,423 286,418 287,406 288,397 289,418 290,386 291,401 292,378 293,395 294,372 295,385 296,402 297,402 298,392 299,376 300,372 301,414 302,422 303,411 304,416 305,421 306,421 307,406 308,408 309,373 310,367 311,343 312,331 313,361 314,330 315,408 316,397 317,340 318,371 319,389 320,346 321,379 322,360 323,375 324,393 325,397 326,352 327,327 328,326 329,340 330,321 331,381 332,388 333,321 334,358 335,347 336,410 337,385 338,362 339,346 340,338 341,329 342,384 343,379 344,338 345,321 346,362 347,384 348,346 349,361 350,375 351,382 352,376 353,343 354,396 355,366 356,322 357,336 358,388 359,360 360,390 361,337 362,338 363,386 364,354 365,357 366,342 367,362 368,376 369,373 370,326 371,371 372,351 373,364 374,390 375,364 376,379 377,379 378,373 379,368 380,331 381,369 382,375 383,336 384,366 385,362 386,355 387,398 388,347 389,386 390,372 391,327 392,321 393,337 394,380 395,363 396,381 397,328 398,382 399,386 400,346 401,353 402,339 403,361 404,321 405,354 406,332 407,357 408,352 409,366 410,328 411,335 412,385 413,360 414,341 415,348 416,334 417,354 418,341 419,375 420,376 421,397 422,325 423,340 424,362 425,323 426,321 427,385 428,329 429,358 430,375 431,381 432,371 433,397 434,398 435,386 436,376 437,383 438,393 439,339 440,371 441,360 442,340 443,327 444,393 445,387 446,332 447,321 448,321 449,361 450,378 451,386 452,321 453,344 454,356 455,326 456,389 457,352 458,321 459,391 460,349 461,389 462,328 463,338 464,346 465,371 466,407 467,370 468,380 469,378 470,400 471,328 472,358 473,355 474,335 475,333 476,355 477,354 478,324 479,374 480,321 481,413 482,338 483,353 484,353 485,325 486,390 487,365 488,343 489,347 490,360 491,327 492,348 493,333 494,342 495,383 496,387 497,402 498,395 499,403 500,321 501,401 502,355 503,403 504,323 505,354 506,387 507,336 508,338 509,321 510,382 511,367 512,349 513,380 514,350 515,337 516,338 517,321 518,331 519,387 520,339 521,376 522,395 523,404 524,350 525,375 526,396 527,370 528,372 529,378 530,355 531,353 532,349 533,321 534,321 535,376 536,325 537,369 538,321 539,399 540,378 541,322 542,339 543,343 544,380 545,390 546,321 547,395 548,387 549,367 550,342 551,339 552,321 553,328 554,359 555,334 556,371 557,400 558,321 559,321 560,345 561,360 562,390 563,386 564,398 565,396 566,358 567,334 568,330 569,364 570,336 571,350 572,327 573,338 574,325 575,321 576,349 577,357 578,383 579,351 580,364 581,379 582,383 583,354 584,378 585,337 586,361 587,321 588,347 589,354 590,360 591,360 592,384 593,321 594,327 595,350 596,344 597,380 598,351 599,385 600,375 601,351 602,384 603,382 604,341 605,362 606,328 607,382 608,388 609,321 610,337 611,336 612,359 613,387 614,321 615,352 616,321 617,393 618,376 619,349 620,374 621,327 622,382 623,400 624,386 625,373 626,329 627,324 628,341 629,363 630,402 631,339 632,398 633,388 634,357 635,328 636,380 637,394 638,321 639,404 640,336 641,387 642,381 643,392 644,358 645,321 646,332 647,359 648,404 649,390 650,375 651,333 652,321 653,402 654,379 655,321 656,387 657,398 658,389 659,321 660,382 661,334 662,395 663,338 664,387 665,359 666,339 667,337 668,359 669,326 670,373 671,321 672,324 673,323 674,401 675,389 676,344 677,321 678,389 679,338 680,362 681,411 682,399 683,406 684,382 685,329 686,345 687,337 688,321 689,375 690,336 691,348 692,337 693,408 694,322 695,397 696,361 697,353 698,348 699,326 700,377 701,377 702,340 703,391 704,322 705,368 706,361 707,368 708,340 709,390 710,390 711,391 712,385 713,348 714,321 715,398 716,370 717,368 718,369 719,379 720,394 721,361 722,378 723,395 724,395 725,326 726,329 727,321 728,330 729,334 730,383 731,390 732,321 733,332 734,329 735,390 736,331 737,346 738,382 739,377 740,321 741,341 742,383 743,380 744,322 745,355 746,362 747,376 748,378 749,356 750,365 751,367 752,370 753,354 754,378 755,386 756,342 757,377 758,340 759,328 760,322 761,323 762,373 763,356 764,356 765,383 766,321 767,382 768,321 769,336 770,321 771,371 772,321 773,325 774,321 775,335 776,341 777,358 778,333 779,334 780,332 781,361 782,343 783,342 784,329 785,325 786,349 787,323 788,369 789,338 790,337 791,339 792,367 793,360 794,359 795,332 796,361 797,341 798,334 799,347 800,364 801,348 802,360 803,342 804,360 805,345 806,366 807,321 808,351 809,326 810,321 811,321 812,386 813,321 814,378 815,321 816,328 817,366 818,339 819,344 820,360 821,346 822,357 823,328 824,338 825,371 826,328 827,341 828,321 829,333 830,345 831,369 832,362 833,321 834,377 835,321 836,374 837,355 838,348 839,377 840,341 841,335 842,357 843,365 844,373 845,330 846,374 847,340 848,328 849,349 850,331 851,326 852,347 853,360 854,321 855,357 856,330 857,344 858,321 859,321 860,321 861,326 862,341 863,355 864,327 865,331 866,332 867,338 868,350 869,350 870,331 871,335 872,326 873,359 874,346 875,354 876,334 877,351 878,321 879,337 880,365 881,345 882,344 883,329 884,321 885,347 886,328 887,321 888,342 889,328 890,342 891,349 892,349 893,321 894,321 895,342 896,338 897,332 898,335 899,345 900,327 901,356 902,324 903,341 904,325 905,326 906,359 907,321 908,339 909,321 910,327 911,321 912,342 913,337 914,353 915,325 916,333 917,331 918,321 919,339 920,321 921,331 922,344 923,354 924,354 925,326 926,340 927,352 928,329 929,321 930,344 931,340 932,354 933,332 934,321 935,321 936,344 937,348 938,321 939,355 940,331 941,321 942,338 943,344 944,323 945,340 946,347 947,330 948,321 949,325 950,351 951,329 952,332 953,329 954,321 955,353 956,354 957,321 958,337 959,351 960,364 961,325 962,334 963,387 964,348 965,401 966,372 967,439 968,397 969,377 970,400 971,387 972,436 973,406 974,388 975,418 976,383 977,395 978,385 979,395 980,421 981,388 982,362 983,413 984,389 985,424 986,406 987,424 988,416 989,433 990,384 991,404 992,407 993,411 994,418 995,443 996,413 997,422 998,432 999,416 1000,414 1001,378 1002,408 1003,426 1004,437 1005,389 1006,415 1007,437 1008,455 1009,424 1010,447 1011,407 1012,415 1013,444 1014,435 1015,454 1016,445 1017,433 1018,410 1019,437 1020,409 1021,432 1022,413 1023,401 1024,433 1025,427 1026,420 1027,432 1028,443 1029,453 1030,433 1031,434 1032,438 1033,458 1034,426 1035,449 1036,441 1037,424 1038,447 1039,446 1040,447 1041,444 1042,460 1043,459 1044,460 1045,450 1046,458 1047,433 1048,439 1049,445 1050,457 1051,444 1052,442 1053,448 1054,442 1055,440 1056,450 1057,444 1058,461 1059,463 1060,469 1061,450 1062,467 1063,473 1064,467 1065,463 1066,459 1067,451 1068,461 1069,459 1070,458 1071,457 1072,461 1073,459 1074,461 1075,467 1076,465 1077,466 1078,460 1079,471 1080,466 1081,469 1082,473 1083,476 1084,474 1085,477 1086,475 1087,479 1088,478 1089,476 1090,479 1091,479 1092,479 1093,478 1094,479 1095,478 1096,479 1097,478 1098,479 1099,478 1100,479 1101,478 1102,479 1103,478 1104,478 1105,478 1106,478 1107,479 1108,479 1109,478 1110,478 1110,484 1109,484 1108,483 1107,483 1106,484 1105,484 1104,484 1103,484 1102,483 1101,484 1100,483 1099,484 1098,483 1097,484 1096,483 1095,483 1094,483 1093,484 1092,483 1091,482 1090,483 1089,487 1088,484 1087,482 1086,488 1085,485 1084,488 1083,486 1082,489 1081,492 1080,496 1079,491 1078,502 1077,495 1076,495 1075,495 1074,498 1073,501 1072,501 1071,501 1070,504 1069,502 1068,500 1067,511 1066,504 1065,499 1064,496 1063,486 1062,492 1061,514 1060,492 1059,498 1058,499 1057,519 1056,513 1055,519 1054,517 1053,513 1052,523 1051,515 1050,504 1049,517 1048,523 1047,527 1046,499 1045,514 1044,499 1043,498 1042,499 1041,517 1040,514 1039,519 1038,517 1037,529 1036,524 1035,516 1034,531 1033,500 1032,517 1031,525 1030,520 1029,506 1028,515 1027,531 1026,542 1025,543 1024,530 1023,559 1022,540 1021,526 1020,557 1019,522 1018,554 1017,532 1016,509 1015,499 1014,523 1013,514 1012,547 1011,562 1010,510 1009,532 1008,501 1007,519 1006,545 1005,571 1004,526 1003,538 1002,554 1001,587 1000,549 999,542 998,525 997,533 996,549 995,512 994,534 993,541 992,551 991,556 990,579 989,525 988,538 987,532 986,555 985,532 984,563 983,550 982,605 981,579 980,535 979,576 978,577 977,554 976,567 975,533 974,575 973,542 972,513 971,560 970,552 969,582 968,561 967,507 966,576 965,539 964,601 963,553 962,614 961,632 960,571 959,575 958,582 957,631 956,575 955,579 954,641 953,622 952,640 951,612 950,567 949,614 948,637 947,602 946,580 945,622 944,619 943,595 942,579 941,633 940,611 939,570 938,630 937,572 936,605 935,623 934,629 933,622 932,568 931,619 930,567 929,638 928,614 927,576 926,586 925,624 924,569 923,589 922,567 921,612 920,627 919,602 918,626 917,641 916,583 915,641 914,591 913,598 912,571 911,641 910,637 909,608 908,588 907,626 906,573 905,619 904,623 903,617 902,601 901,575 900,631 899,572 898,623 897,603 896,616 895,601 894,641 893,641 892,563 891,569 890,593 889,610 888,595 887,624 886,641 885,571 884,622 883,622 882,604 881,583 880,555 879,597 878,641 877,566 876,604 875,575 874,581 873,568 872,610 871,598 870,627 869,587 868,571 867,597 866,625 865,600 864,618 863,570 862,604 861,623 860,619 859,641 858,618 857,594 856,593 855,576 854,631 853,579 852,569 851,623 850,607 849,577 848,606 847,623 846,559 845,639 844,564 843,575 842,593 841,632 840,601 839,559 838,619 837,593 836,562 835,641 834,556 833,640 832,563 831,560 830,607 829,595 828,625 827,628 826,622 825,557 824,625 823,611 822,597 821,612 820,587 819,599 818,623 817,575 816,630 815,641 814,556 813,632 812,560 811,636 810,638 809,619 808,596 807,641 806,580 805,625 804,567 803,599 802,592 801,611 800,569 799,602 798,625 797,615 796,564 795,611 794,572 793,571 792,560 791,635 790,602 789,595 788,582 787,626 786,589 785,638 784,641 783,607 782,623 781,602 780,598 779,610 778,641 777,599 776,613 775,610 774,636 773,632 772,641 771,566 770,641 769,622 768,640 767,563 766,641 765,558 764,600 763,597 762,573 761,641 760,624 759,618 758,615 757,553 756,595 755,557 754,566 753,588 752,562 751,571 750,599 749,600 748,563 747,571 746,599 745,592 744,630 743,564 742,563 741,616 740,641 739,573 738,564 737,610 736,620 735,562 734,630 733,620 732,641 731,557 730,564 729,620 728,617 727,638 726,619 725,639 724,561 723,553 722,577 721,590 720,560 719,573 718,577 717,589 716,597 715,550 714,641 713,602 712,559 711,557 710,557 709,564 708,612 707,571 706,593 705,582 704,641 703,556 702,622 701,583 700,583 699,628 698,620 697,608 696,587 695,561 694,624 693,555 692,608 691,611 690,611 689,575 688,641 687,626 686,612 685,641 684,564 683,540 682,546 681,536 680,598 679,623 678,566 677,641 676,616 675,567 674,558 673,641 672,635 671,641 670,584 669,641 668,594 667,639 666,615 665,597 664,555 663,605 662,559 661,616 660,572 659,631 658,565 657,559 656,563 655,641 654,582 653,544 652,641 651,636 650,573 649,570 648,562 647,595 646,641 645,629 644,597 643,576 642,573 641,563 640,611 639,552 638,628 637,557 636,565 635,627 634,597 633,568 632,560 631,627 630,556 629,597 628,619 627,639 626,641 625,576 624,573 623,557 622,573 621,637 620,581 619,602 618,590 617,565 616,641 615,603 614,641 613,570 612,599 611,619 610,617 609,641 608,572 607,571 606,639 605,595 604,623 603,580 602,580 601,603 600,581 599,577 598,614 597,567 596,622 595,610 594,641 593,641 592,574 591,593 590,605 589,615 588,610 587,641 586,583 585,626 584,583 583,595 582,584 581,570 580,606 579,596 578,572 577,613 576,625 575,634 574,636 573,612 572,620 571,597 570,623 569,599 568,641 567,641 566,598 565,568 564,569 563,574 562,579 561,604 560,625 559,641 558,633 557,566 556,581 555,641 554,589 553,635 552,641 551,625 550,636 549,603 548,571 547,565 546,639 545,560 544,569 543,618 542,622 541,641 540,580 539,561 538,641 537,580 536,641 535,577 534,636 533,639 532,599 531,595 530,604 529,587 528,585 527,593 526,564 525,582 524,605 523,547 522,559 521,599 520,629 519,584 518,632 517,634 516,634 515,613 514,610 513,581 512,607 511,595 510,577 509,638 508,626 507,621 506,561 505,598 504,641 503,557 502,602 501,564 500,641 499,546 498,563 497,558 496,573 495,583 494,603 493,634 492,605 491,632 490,601 489,615 488,621 487,590 486,567 485,641 484,612 483,606 482,619 481,548 480,641 479,590 478,631 477,613 476,595 475,641 474,624 473,601 472,596 471,638 470,553 469,584 468,589 467,593 466,554 465,603 464,620 463,623 462,638 461,572 460,613 459,568 458,641 457,601 456,584 455,622 454,607 453,635 452,641 451,570 450,596 449,606 448,641 447,641 446,634 445,575 444,565 443,641 442,604 441,594 440,589 439,624 438,565 437,575 436,583 435,574 434,562 433,569 432,602 431,578 430,589 429,600 428,626 427,566 426,641 425,632 424,589 423,621 422,641 421,565 420,588 419,592 418,634 417,608 416,626 415,601 414,619 413,611 412,581 411,628 410,628 409,584 408,599 407,593 406,641 405,606 404,641 403,601 402,618 401,622 400,607 399,583 398,587 397,629 396,588 395,598 394,572 393,610 392,641 391,637 390,580 389,570 388,612 387,570 386,622 385,605 384,587 383,606 382,586 381,580 380,631 379,586 378,598 377,587 376,578 375,592 374,569 373,592 372,604 371,590 370,641 369,588 368,585 367,585 366,618 365,618 364,599 363,575 362,618 361,613 360,566 359,598 358,574 357,617 356,641 355,595 354,559 353,615 352,586 351,572 350,593 349,609 348,607 347,563 346,589 345,641 344,636 343,596 342,583 341,627 340,638 339,622 338,597 337,569 336,549 335,620 334,608 333,641 332,576 331,586 330,639 329,626 328,641 327,633 326,599 325,553 324,568 323,573 322,603 321,591 320,621 319,575 318,586 317,641 316,573 315,548 314,634 313,616 312,613 311,619 310,597 309,594 308,548 307,558 306,539 305,546 304,545 303,544 302,546 301,544 300,594 299,592 298,581 297,558 296,558 295,576 294,590 293,572 292,580 291,552 290,574 289,542 288,560 287,551 286,540 285,541 284,549 283,543 282,555 281,539 280,551 279,544 278,537 277,531 276,533 275,543 274,518 273,530 272,545 271,521 270,516 269,517 268,517 267,533 266,517 265,516 264,512 263,520 262,513 261,547 260,517 259,544 258,548 257,514 256,521 255,543 254,527 253,542 252,542 251,549 250,513 249,538 248,546 247,523 246,522 245,522 244,549 243,530 242,534 241,529 240,531 239,530 238,539 237,533 236,543 235,544 234,551 233,547 232,524 231,528 230,541 229,540 228,522 227,525 226,531 225,510 224,518 223,503 222,504 221,504 220,500 219,499 218,502 217,502 216,504 215,506 214,508 213,508 212,509 211,512 210,515 209,517 208,529 207,535 206,538 205,517 204,505 203,505 202,505 201,507 200,511 199,512 198,510 197,513 196,520 195,520 194,521 193,538 192,514 191,495 190,493 189,493 188,496 187,497 186,500 185,501 184,503 183,505 182,508 181,510 180,510 179,516 178,514 177,526 176,546 175,508 174,497 173,497 172,493 171,492 170,492 169,496 168,493 167,495 166,495 165,497 164,500 163,502 162,506 161,510 160,516 159,519 158,532 157,525 156,504 155,492 154,494 153,498 152,498 151,503 150,504 149,507 148,511 147,510 146,514 145,519 144,522 143,506 142,507 141,512 140,512 139,516 138,513 137,515 136,534 135,532 134,522 133,508 132,508 131,511 130,511 129,513 128,518 127,518 126,518 125,521 124,506 123,504 122,510 121,511 120,510 119,511 118,515 117,515 116,518 115,525 114,537 113,502 112,497 111,499 110,501 109,504 108,505 107,506 106,507 105,507 104,512 103,510 102,516 101,515 100,516 99,517 98,524 97,506 96,506 95,508 94,508 93,512 92,511 91,513 90,513 89,517 88,515 87,526 86,499 85,497 84,499 83,501 82,503 81,505 80,507 79,511 78,509 77,516 76,518 75,542 74,533 73,512 72,503 71,504 70,506 69,510 68,512 67,515 66,518 65,516 64,520 63,496 62,499 61,499 60,504 59,508 58,508 57,514 56,514 55,520 54,521 53,510 52,509 51,513 50,515 49,514 48,517 47,518 46,521 45,525 44,508 43,510 42,511 41,511 40,511 39,517 38,514 37,522 36,518 35,502 34,495 33,494 32,492 31,495 30,492 29,497 28,498 27,492 26,496 25,498 24,493 23,496 22,499 21,500 20,503 19,503 18,509 17,507 16,512 15,513 14,517 13,517 12,519 11,504 10,508 9,509 8,509 7,511 6,512 5,512 4,519 3,520 2,530 1,507 0,494" fill="#53678f"/><path d="M0 81.5h1111M0 240.5h1111M0 402.5h1111M0 561.5h1111" stroke="#566890" stroke-width="1" opacity="0.8"/></svg>
<div class="b" style="left:40px;top:312.3px;width:1111px;height:1.2px;background:#bcc1d0;"></div>
<div class="b" style="left:40px;top:633.3px;width:1111px;height:1.2px;background:#bcc1d0;"></div>
<svg class="b" style="left:39px;top:312px;" width="6" height="6" viewBox="0 0 6 6"><polygon points="0,0 6,0 0,6" fill="#f2e500"/></svg>
<svg class="b" style="left:39px;top:633px;" width="6" height="6" viewBox="0 0 6 6"><polygon points="0,0 6,0 0,6" fill="#f2e500"/></svg>
<div class="b" style="left:39.5px;top:473px;width:1111.5px;height:1.2px;background:#2b3450;"></div>
<div class="b" style="left:1px;top:473px;width:38.5px;height:1px;background:#2a2a2a;"></div>
<svg class="b" style="left:5px;top:141px;" width="7" height="8.5" viewBox="0 0 7 8.5"><rect x="0" y="3.4" width="7" height="5" rx="0.8" fill="#f4f4f4"/><path d="M1.6 3.6v-1.2a1.9 1.9 0 0 1 3.8 0v1.2" stroke="#f4f4f4" stroke-width="1.1" fill="none"/></svg>
<svg class="b" style="left:19px;top:139.5px;" width="11" height="10.5" viewBox="0 0 11 10.5"><rect x="0" y="2.6" width="11" height="5.4" rx="0.8" fill="#2b8fd0"/><path d="M1.4 4.3h2.8M1.4 6.3h2.8M6.8 4.3h2.8M6.8 6.3h2.8" stroke="#8fd0f8" stroke-width="0.8"/><path d="M5.5 0.3v9.9M4 0.4h3M4 10.1h3" stroke="#e0e0e0" stroke-width="1" fill="none"/></svg>
<div class="b" style="left:2px;top:154px;width:14.5px;height:11.5px;background:linear-gradient(#b4bee2,#8795c8 45%,#7785ba);border:1px solid #9aa6d2;border-radius:1px;"></div>
<span class="t" style='font:bold 9px/12px "DejaVu Sans", "Noto Sans CJK JP", sans-serif;color:#ffffff;top:154.50px;left:7.93px;transform-origin:0 50%;'>1</span>
<div class="b" style="left:18.7px;top:154px;width:10.8px;height:11.2px;background:linear-gradient(#a6b1d8,#7d8bbe 50%,#6f7db2);border:1px solid #96a2cf;border-radius:1px;"></div>
<div class="b" style="left:20.3px;top:156px;width:7.6px;height:1.4px;background:#f0f2fa;"></div>
<div class="b" style="left:2px;top:475px;width:14.5px;height:11.5px;background:linear-gradient(#b4bee2,#8795c8 45%,#7785ba);border:1px solid #9aa6d2;border-radius:1px;"></div>
<span class="t" style='font:bold 9px/12px "DejaVu Sans", "Noto Sans CJK JP", sans-serif;color:#ffffff;top:475.50px;left:7.93px;transform-origin:0 50%;'>2</span>
<div class="b" style="left:18.7px;top:475px;width:10.8px;height:11.2px;background:linear-gradient(#a6b1d8,#7d8bbe 50%,#6f7db2);border:1px solid #96a2cf;border-radius:1px;"></div>
<div class="b" style="left:20.3px;top:477px;width:7.6px;height:1.4px;background:#f0f2fa;"></div>
<span class="t" style='font:normal 7px/12px "DejaVu Sans Condensed", "DejaVu Sans", "Noto Sans CJK JP", sans-serif;color:#bcbcbc;top:308.60px;left:24.89px;transform-origin:0 50%;-webkit-text-stroke:0;'>-oo</span>
<span class="t" style='font:normal 7.2px/12px "DejaVu Sans Condensed", "DejaVu Sans", "Noto Sans CJK JP", sans-serif;color:#d0d0d0;top:288.70px;left:16.60px;transform-origin:0 50%;transform:scaleX(1.1115);'>-18.1</span>
<div class="b" style="left:37px;top:293.20000000000005px;width:1.2px;height:1px;background:#5e5e5e;"></div>
<span class="t" style='font:normal 7.2px/12px "DejaVu Sans Condensed", "DejaVu Sans", "Noto Sans CJK JP", sans-serif;color:#d0d0d0;top:328.50px;left:16.60px;transform-origin:0 50%;transform:scaleX(1.1115);'>-18.1</span>
<div class="b" style="left:37px;top:333.0px;width:1.2px;height:1px;background:#5e5e5e;"></div>
<span class="t" style='font:normal 7.2px/12px "DejaVu Sans Condensed", "DejaVu Sans", "Noto Sans CJK JP", sans-serif;color:#d0d0d0;top:268.80px;left:16.60px;transform-origin:0 50%;transform:scaleX(1.1115);'>-12.0</span>
<div class="b" style="left:37px;top:273.3px;width:1.2px;height:1px;background:#5e5e5e;"></div>
<span class="t" style='font:normal 7.2px/12px "DejaVu Sans Condensed", "DejaVu Sans", "Noto Sans CJK JP", sans-serif;color:#d0d0d0;top:348.40px;left:16.60px;transform-origin:0 50%;transform:scaleX(1.1115);'>-12.0</span>
<div class="b" style="left:37px;top:352.90000000000003px;width:1.2px;height:1px;background:#5e5e5e;"></div>
<span class="t" style='font:normal 7.2px/12px "DejaVu Sans Condensed", "DejaVu Sans", "Noto Sans CJK JP", sans-serif;color:#d0d0d0;top:248.90px;left:21.30px;transform-origin:0 50%;transform:scaleX(1.1010);'>-8.5</span>
<div class="b" style="left:37px;top:253.40000000000003px;width:1.2px;height:1px;background:#5e5e5e;"></div>
<span class="t" style='font:normal 7.2px/12px "DejaVu Sans Condensed", "DejaVu Sans", "Noto Sans CJK JP", sans-serif;color:#d0d0d0;top:368.30px;left:21.30px;transform-origin:0 50%;transform:scaleX(1.1010);'>-8.5</span>
<div class="b" style="left:37px;top:372.8px;width:1.2px;height:1px;background:#5e5e5e;"></div>
<span class="t" style='font:normal 7.2px/12px "DejaVu Sans Condensed", "DejaVu Sans", "Noto Sans CJK JP", sans-serif;color:#d0d0d0;top:229.00px;left:21.30px;transform-origin:0 50%;transform:scaleX(1.1010);'>-6.0</span>
<div class="b" style="left:37px;top:233.50000000000003px;width:1.2px;height:1px;background:#5e5e5e;"></div>
<span class="t" style='font:normal 7.2px/12px "DejaVu Sans Condensed", "DejaVu Sans", "Noto Sans CJK JP", sans-serif;color:#d0d0d0;top:388.20px;left:21.30px;transform-origin:0 50%;transform:scaleX(1.1010);'>-6.0</span>
<div class="b" style="left:37px;top:392.70000000000005px;width:1.2px;height:1px;background:#5e5e5e;"></div>
<span class="t" style='font:normal 7.2px/12px "DejaVu Sans Condensed", "DejaVu Sans", "Noto Sans CJK JP", sans-serif;color:#d0d0d0;top:209.10px;left:21.30px;transform-origin:0 50%;transform:scaleX(1.1010);'>-4.1</span>
<div class="b" style="left:37px;top:213.60000000000002px;width:1.2px;height:1px;background:#5e5e5e;"></div>
<span class="t" style='font:normal 7.2px/12px "DejaVu Sans Condensed", "DejaVu Sans", "Noto Sans CJK JP", sans-serif;color:#d0d0d0;top:408.10px;left:21.30px;transform-origin:0 50%;transform:scaleX(1.1010);'>-4.1</span>
<div class="b" style="left:37px;top:412.6px;width:1.2px;height:1px;background:#5e5e5e;"></div>
<span class="t" style='font:normal 7.2px/12px "DejaVu Sans Condensed", "DejaVu Sans", "Noto Sans CJK JP", sans-serif;color:#d0d0d0;top:189.20px;left:21.30px;transform-origin:0 50%;transform:scaleX(1.1010);'>-2.5</span>
<div class="b" style="left:37px;top:193.70000000000005px;width:1.2px;height:1px;background:#5e5e5e;"></div>
<span class="t" style='font:normal 7.2px/12px "DejaVu Sans Condensed", "DejaVu Sans", "Noto Sans CJK JP", sans-serif;color:#d0d0d0;top:428.00px;left:21.30px;transform-origin:0 50%;transform:scaleX(1.1010);'>-2.5</span>
<div class="b" style="left:37px;top:432.5px;width:1.2px;height:1px;background:#5e5e5e;"></div>
<span class="t" style='font:normal 7.2px/12px "DejaVu Sans Condensed", "DejaVu Sans", "Noto Sans CJK JP", sans-serif;color:#d0d0d0;top:169.30px;left:21.30px;transform-origin:0 50%;transform:scaleX(1.1010);'>-1.2</span>
<div class="b" style="left:37px;top:173.80000000000004px;width:1.2px;height:1px;background:#5e5e5e;"></div>
<span class="t" style='font:normal 7.2px/12px "DejaVu Sans Condensed", "DejaVu Sans", "Noto Sans CJK JP", sans-serif;color:#d0d0d0;top:447.90px;left:21.30px;transform-origin:0 50%;transform:scaleX(1.1010);'>-1.2</span>
<div class="b" style="left:37px;top:452.4px;width:1.2px;height:1px;background:#5e5e5e;"></div>
<span class="t" style='font:normal 7px/12px "DejaVu Sans Condensed", "DejaVu Sans", "Noto Sans CJK JP", sans-serif;color:#bcbcbc;top:629.60px;left:24.89px;transform-origin:0 50%;-webkit-text-stroke:0;'>-oo</span>
<span class="t" style='font:normal 7.2px/12px "DejaVu Sans Condensed", "DejaVu Sans", "Noto Sans CJK JP", sans-serif;color:#d0d0d0;top:609.70px;left:16.60px;transform-origin:0 50%;transform:scaleX(1.1115);'>-18.1</span>
<div class="b" style="left:37px;top:614.2px;width:1.2px;height:1px;background:#5e5e5e;"></div>
<span class="t" style='font:normal 7.2px/12px "DejaVu Sans Condensed", "DejaVu Sans", "Noto Sans CJK JP", sans-serif;color:#d0d0d0;top:649.50px;left:16.60px;transform-origin:0 50%;transform:scaleX(1.1115);'>-18.1</span>
<div class="b" style="left:37px;top:654.0px;width:1.2px;height:1px;background:#5e5e5e;"></div>
<span class="t" style='font:normal 7.2px/12px "DejaVu Sans Condensed", "DejaVu Sans", "Noto Sans CJK JP", sans-serif;color:#d0d0d0;top:589.80px;left:16.60px;transform-origin:0 50%;transform:scaleX(1.1115);'>-12.0</span>
<div class="b" style="left:37px;top:594.3000000000001px;width:1.2px;height:1px;background:#5e5e5e;"></div>
<span class="t" style='font:normal 7.2px/12px "DejaVu Sans Condensed", "DejaVu Sans", "Noto Sans CJK JP", sans-serif;color:#d0d0d0;top:669.40px;left:16.60px;transform-origin:0 50%;transform:scaleX(1.1115);'>-12.0</span>
<div class="b" style="left:37px;top:673.9px;width:1.2px;height:1px;background:#5e5e5e;"></div>
<span class="t" style='font:normal 7.2px/12px "DejaVu Sans Condensed", "DejaVu Sans", "Noto Sans CJK JP", sans-serif;color:#d0d0d0;top:569.90px;left:21.30px;transform-origin:0 50%;transform:scaleX(1.1010);'>-8.5</span>
<div class="b" style="left:37px;top:574.4px;width:1.2px;height:1px;background:#5e5e5e;"></div>
<span class="t" style='font:normal 7.2px/12px "DejaVu Sans Condensed", "DejaVu Sans", "Noto Sans CJK JP", sans-serif;color:#d0d0d0;top:689.30px;left:21.30px;transform-origin:0 50%;transform:scaleX(1.1010);'>-8.5</span>
<div class="b" style="left:37px;top:693.8000000000001px;width:1.2px;height:1px;background:#5e5e5e;"></div>
<span class="t" style='font:normal 7.2px/12px "DejaVu Sans Condensed", "DejaVu Sans", "Noto Sans CJK JP", sans-serif;color:#d0d0d0;top:550.00px;left:21.30px;transform-origin:0 50%;transform:scaleX(1.1010);'>-6.0</span>
<div class="b" style="left:37px;top:554.5px;width:1.2px;height:1px;background:#5e5e5e;"></div>
<span class="t" style='font:normal 7.2px/12px "DejaVu Sans Condensed", "DejaVu Sans", "Noto Sans CJK JP", sans-serif;color:#d0d0d0;top:709.20px;left:21.30px;transform-origin:0 50%;transform:scaleX(1.1010);'>-6.0</span>
<div class="b" style="left:37px;top:713.7px;width:1.2px;height:1px;background:#5e5e5e;"></div>
<span class="t" style='font:normal 7.2px/12px "DejaVu Sans Condensed", "DejaVu Sans", "Noto Sans CJK JP", sans-serif;color:#d0d0d0;top:530.10px;left:21.30px;transform-origin:0 50%;transform:scaleX(1.1010);'>-4.1</span>
<div class="b" style="left:37px;top:534.6px;width:1.2px;height:1px;background:#5e5e5e;"></div>
<span class="t" style='font:normal 7.2px/12px "DejaVu Sans Condensed", "DejaVu Sans", "Noto Sans CJK JP", sans-serif;color:#d0d0d0;top:729.10px;left:21.30px;transform-origin:0 50%;transform:scaleX(1.1010);'>-4.1</span>
<div class="b" style="left:37px;top:733.6px;width:1.2px;height:1px;background:#5e5e5e;"></div>
<span class="t" style='font:normal 7.2px/12px "DejaVu Sans Condensed", "DejaVu Sans", "Noto Sans CJK JP", sans-serif;color:#d0d0d0;top:510.20px;left:21.30px;transform-origin:0 50%;transform:scaleX(1.1010);'>-2.5</span>
<div class="b" style="left:37px;top:514.7px;width:1.2px;height:1px;background:#5e5e5e;"></div>
<span class="t" style='font:normal 7.2px/12px "DejaVu Sans Condensed", "DejaVu Sans", "Noto Sans CJK JP", sans-serif;color:#d0d0d0;top:749.00px;left:21.30px;transform-origin:0 50%;transform:scaleX(1.1010);'>-2.5</span>
<div class="b" style="left:37px;top:753.5px;width:1.2px;height:1px;background:#5e5e5e;"></div>
<span class="t" style='font:normal 7.2px/12px "DejaVu Sans Condensed", "DejaVu Sans", "Noto Sans CJK JP", sans-serif;color:#d0d0d0;top:490.30px;left:21.30px;transform-origin:0 50%;transform:scaleX(1.1010);'>-1.2</span>
<div class="b" style="left:37px;top:494.80000000000007px;width:1.2px;height:1px;background:#5e5e5e;"></div>
<span class="t" style='font:normal 7.2px/12px "DejaVu Sans Condensed", "DejaVu Sans", "Noto Sans CJK JP", sans-serif;color:#d0d0d0;top:768.90px;left:21.30px;transform-origin:0 50%;transform:scaleX(1.1010);'>-1.2</span>
<div class="b" style="left:37px;top:773.4px;width:1.2px;height:1px;background:#5e5e5e;"></div>
<div class="b" style="left:0px;top:794.3px;width:1153px;height:1.2px;background:#2a2a2a;"></div>
<div class="b" style="left:1px;top:795.5px;width:1152px;height:10.5px;background:#404040;"></div>
<div class="b" style="left:39.5px;top:795.5px;width:500.5px;height:10px;background:#4c4c4c;"></div>
<div class="b" style="left:540px;top:795.5px;width:564px;height:10px;background:#393939;"></div>
<div class="b" style="left:37.5px;top:797px;width:1px;height:8px;background:#5a5a5a;"></div>
<div class="b" style="left:39.5px;top:797px;width:1px;height:8px;background:#5a5a5a;"></div>
<div class="b" style="left:535px;top:797.5px;width:1px;height:6.5px;background:#333;"></div>
<div class="b" style="left:537px;top:797.5px;width:1px;height:6.5px;background:#333;"></div>
<svg class="b" style="left:2px;top:796.5px;" width="36" height="9" viewBox="0 0 36 9"><path d="M2.2 4.5h4.6M4.5 2.2v4.6" stroke="#ececec" stroke-width="1.5"/><path d="M13.5 4.5h4.4" stroke="#ececec" stroke-width="1.5"/><path d="M29.6 1.6v5.8l-3.4-2.9z" fill="#ececec"/></svg>
<svg class="b" style="left:1100px;top:796.5px;" width="50" height="9" viewBox="0 0 50 9"><path d="M4.4 1.6v5.8l3.4-2.9z" fill="#ececec"/><path d="M15.2 4.5h4.6M17.5 2.2v4.6" stroke="#ececec" stroke-width="1.5"/><path d="M31 4.5h4.4" stroke="#ececec" stroke-width="1.5"/><path d="M43.6 1.6v5.8l-3-2.9zM45.4 1.6v5.8l3-2.9z" fill="#ececec"/></svg>
<div class="b" style="left:0px;top:806px;width:1153px;height:1px;background:#2e2e2e;"></div>
<div class="b" style="left:1px;top:807px;width:1152px;height:18.5px;background:#444444;"></div>
<svg class="b" style="left:6px;top:810.3px;" width="11" height="11" viewBox="0 0 11 11"><circle cx="5" cy="5" r="4.2" fill="#6a6a6a" stroke="#b4b4b4" stroke-width="1.1"/><circle cx="5" cy="5" r="2.1" fill="#808080"/><circle cx="8" cy="8.2" r="2.2" fill="#444" stroke="#c8c8c8" stroke-width="1"/></svg>
<svg class="b" style="left:22.3px;top:810.3px;" width="11" height="11" viewBox="0 0 11 11"><circle cx="5.3" cy="5.4" r="4.4" fill="#6a6a6a" stroke="#a4a4a4" stroke-width="1.1"/><circle cx="5.3" cy="5.4" r="2.5" fill="#858585"/></svg>
<svg class="b" style="left:40px;top:811.5px;" width="8.5" height="8.6" viewBox="0 0 8.5 8.6"><rect x="0" y="0" width="1.7" height="8.6" fill="#f4f4f4"/><path d="M8.2 0v8.6l-6.2-4.3z" fill="#f4f4f4"/></svg>
<svg class="b" style="left:56.5px;top:811.5px;" width="8.5" height="8.6" viewBox="0 0 8.5 8.6"><rect x="6.8" y="0" width="1.7" height="8.6" fill="#f4f4f4"/><path d="M0.3 0v8.6l6.2-4.3z" fill="#f4f4f4"/></svg>
<svg class="b" style="left:73px;top:811.3px;" width="9" height="9" viewBox="0 0 9 9"><rect x="0" y="0" width="9" height="9" fill="#f6f6f6"/><rect x="1" y="1" width="7" height="7" fill="#e0e0e0"/></svg>
<svg class="b" style="left:90.3px;top:810.6px;" width="8.5" height="10.4" viewBox="0 0 8.5 10.4"><path d="M0.3 0.2l8 5-8 5z" fill="#f4f4f4"/></svg>
<svg class="b" style="left:105.5px;top:810.6px;" width="11" height="10.5" viewBox="0 0 11 10.5"><path d="M5 5.2l4.2-3.2a5 5 0 1 0 0 6.4z" fill="#f6f6f6"/><path d="M6.2 5.2l3.6-2.7q1.8 2.7 0 5.4z" fill="#c9a000"/></svg>
<span class="t" style='font:normal 9.5px/12px "Liberation Sans", "Noto Sans CJK JP", sans-serif;color:#d4d4d4;top:808.20px;left:129.00px;transform-origin:0 50%;'><span class="r" style="transform:scaleX(0.6564);margin-right:-9.80px">レート</span><span class="r" style="transform:scaleX(1.0000);margin-right:-0.00px">: 0.00</span></span>
<div class="b" style="left:191.7px;top:810.9px;width:117px;height:2px;background:#dcdcdc;border-radius:1px;"></div>
<div class="b" style="left:243.3px;top:807.2px;width:13px;height:9px;background:#f8f8f8;border-radius:1px;"></div>
<div class="b" style="left:248.6px;top:809.2px;width:0.9px;height:5px;background:#555;"></div>
<div class="b" style="left:250.4px;top:809.2px;width:0.9px;height:5px;background:#555;"></div>
<svg class="b" style="left:258.2px;top:816.6px;" width="5.4" height="4" viewBox="0 0 5.4 4"><path d="M2.7 0l2.7 4h-5.4z" fill="#f0f0f0"/></svg>
<div class="b" style="left:913.7px;top:810px;width:56.799999999999955px;height:11.5px;background:#2e2e2e;"></div>
<span class="t" style='font:normal 9.5px/12px "DejaVu Sans Condensed", "DejaVu Sans", "Noto Sans CJK JP", sans-serif;color:#dadada;top:810.70px;left:917.00px;transform-origin:0 50%;transform:scaleX(0.8884);'>00:00:00.000</span>
<div class="b" style="left:972.5px;top:810px;width:56.299999999999955px;height:11.5px;background:#2e2e2e;"></div>
<span class="t" style='font:normal 9.5px/12px "DejaVu Sans Condensed", "DejaVu Sans", "Noto Sans CJK JP", sans-serif;color:#dadada;top:810.70px;left:975.00px;transform-origin:0 50%;transform:scaleX(0.8971);'>00:00:28.546</span>
<div class="b" style="left:1030.5px;top:810px;width:57.0px;height:11.5px;background:#2e2e2e;"></div>
<span class="t" style='font:normal 9.5px/12px "DejaVu Sans Condensed", "DejaVu Sans", "Noto Sans CJK JP", sans-serif;color:#dadada;top:810.70px;left:1033.00px;transform-origin:0 50%;transform:scaleX(0.9058);'>00:00:28.546</span>
<div class="b" style="left:1090.5px;top:810px;width:58.299999999999955px;height:11.5px;background:#2e2e2e;"></div>
<span class="t" style='font:normal 9.5px/12px "DejaVu Sans Condensed", "DejaVu Sans", "Noto Sans CJK JP", sans-serif;color:#dadada;top:810.70px;left:1125.00px;transform-origin:0 50%;transform:scaleX(0.8644);'>1:707</span>
<div class="b" style="left:0px;top:825.5px;width:1153px;height:12.5px;background:#262626;"></div>
<div class="b" style="left:1px;top:825.5px;width:165px;height:12px;background:#494949;"></div>
<div class="b" style="left:166px;top:826px;width:106px;height:11.5px;background:#393939;"></div>
<span class="t" style='font:bold 9.5px/12px "DejaVu Sans Condensed", "DejaVu Sans", "Noto Sans CJK JP", sans-serif;color:#f2f2f2;top:826.80px;left:7.00px;transform-origin:0 50%;transform:scaleX(0.8903);'>Track01_HareNochiKotori.wav *</span>
<svg class="b" style="left:146px;top:828.5px;" width="18" height="8" viewBox="0 0 18 8"><rect x="0.6" y="2.6" width="4.4" height="4.2" fill="none" stroke="#f0f0f0" stroke-width="1"/><path d="M2.2 2.4v-1.6h4.4v4.2h-1.4" fill="none" stroke="#f0f0f0" stroke-width="1"/><path d="M11.3 1.4l5 5.2M16.3 1.4l-5 5.2" stroke="#f4f4f4" stroke-width="1.5"/></svg>
<span class="t" style='font:normal 9.5px/12px "DejaVu Sans Condensed", "DejaVu Sans", "Noto Sans CJK JP", sans-serif;color:#d2d2d2;top:826.90px;left:173.30px;transform-origin:0 50%;transform:scaleX(0.9104);'>capture_edit.wav</span>
<div class="b" style="left:0px;top:838px;width:1200px;height:3px;background:#212121;"></div>
<div class="b" style="left:0px;top:841px;width:1200px;height:17.5px;background:#3b3b3b;"></div>
<div class="b" style="left:0px;top:858.5px;width:1200px;height:1.5px;background:#6a6a6a;"></div>
<div class="b" style="left:937.5px;top:842px;width:48.5px;height:16px;background:#414141;"></div>
<div class="b" style="left:987px;top:842px;width:39.5px;height:16px;background:#414141;"></div>
<div class="b" style="left:1027.5px;top:842px;width:41.0px;height:16px;background:#414141;"></div>
<div class="b" style="left:1069.5px;top:842px;width:64.0px;height:16px;background:#414141;"></div>
<div class="b" style="left:1134.5px;top:842px;width:64.5px;height:16px;background:#414141;"></div>
<span class="t" style='font:normal 9.5px/12px "DejaVu Sans Condensed", "DejaVu Sans", "Noto Sans CJK JP", sans-serif;color:#dcdcdc;top:844.50px;left:944.00px;transform-origin:0 50%;transform:scaleX(0.8959);'>44,100 Hz</span>
<span class="t" style='font:normal 9.5px/12px "DejaVu Sans Condensed", "DejaVu Sans", "Noto Sans CJK JP", sans-serif;color:#dcdcdc;top:844.50px;left:992.50px;transform-origin:0 50%;'><span class="r" style="transform:scaleX(0.9741);margin-right:-0.35px">16 </span><span class="r" style="transform:scaleX(0.5000);margin-right:-14.26px">ビット</span></span>
<span class="t" style='font:normal 9.5px/12px "DejaVu Sans Condensed", "DejaVu Sans", "Noto Sans CJK JP", sans-serif;color:#dcdcdc;top:844.50px;left:1035.00px;transform-origin:0 50%;transform:scaleX(0.6313);'>ステレオ</span>
<span class="t" style='font:normal 9.5px/12px "DejaVu Sans Condensed", "DejaVu Sans", "Noto Sans CJK JP", sans-serif;color:#dcdcdc;top:844.50px;left:1076.50px;transform-origin:0 50%;transform:scaleX(0.9058);'>00:00:25.173</span>
<span class="t" style='font:normal 9.5px/12px "DejaVu Sans Condensed", "DejaVu Sans", "Noto Sans CJK JP", sans-serif;color:#dcdcdc;top:844.50px;left:1141.00px;transform-origin:0 50%;transform:scaleX(0.8917);'>260,869.9 MB</span>
<div class="b" style="left:1151px;top:77px;width:2px;height:761px;background:#2a2a2a;"></div>
<div class="b" style="left:1153px;top:77.3px;width:47px;height:761px;background:#494949;"></div>
<div class="b" style="left:1161.6px;top:84.3px;width:17px;height:12.2px;background:linear-gradient(#b4bee2,#8795c8 45%,#7785ba);border:1px solid #9aa6d2;border-radius:1px;"></div>
<span class="t" style='font:bold 9px/12px "DejaVu Sans", "Noto Sans CJK JP", sans-serif;color:#ffffff;top:85.10px;left:1170.03px;transform-origin:0 50%;'>1</span>
<div class="b" style="left:1161.6px;top:98.3px;width:17px;height:12.2px;background:linear-gradient(#b4bee2,#8795c8 45%,#7785ba);border:1px solid #9aa6d2;border-radius:1px;"></div>
<span class="t" style='font:bold 9px/12px "DejaVu Sans", "Noto Sans CJK JP", sans-serif;color:#ffffff;top:99.10px;left:1170.03px;transform-origin:0 50%;'>2</span>
<div class="b" style="left:1160.6px;top:112.8px;width:34.4px;height:705.5px;background:#000000;"></div>
<svg class="b" style="left:1160.6px;top:112.8px;" width="34.4" height="705.5" viewBox="0 0 34.4 705.5"><rect x="6.5" y="29.8" width="1.2" height="126.5" fill="#9c1616"/><rect x="27.5" y="29.8" width="1.2" height="126.5" fill="#9c1616"/><rect x="6.5" y="156.3" width="1.2" height="123.6" fill="#c08a2c"/><rect x="27.5" y="156.3" width="1.2" height="123.6" fill="#c08a2c"/><rect x="6.5" y="279.9" width="1.2" height="407.8" fill="#2c641e"/><rect x="27.5" y="279.9" width="1.2" height="407.8" fill="#2c641e"/><rect x="7.9" y="44.1" width="1.6" height="1" fill="#b8b8b8"/><rect x="25.7" y="44.1" width="1.6" height="1" fill="#b8b8b8"/><rect x="7.9" y="58.1" width="1.6" height="1" fill="#b8b8b8"/><rect x="25.7" y="58.1" width="1.6" height="1" fill="#b8b8b8"/><rect x="7.9" y="71.9" width="1.6" height="1" fill="#b8b8b8"/><rect x="25.7" y="71.9" width="1.6" height="1" fill="#b8b8b8"/><rect x="7.9" y="99.1" width="1.6" height="1" fill="#b8b8b8"/><rect x="25.7" y="99.1" width="1.6" height="1" fill="#b8b8b8"/><rect x="7.9" y="113.1" width="1.6" height="1" fill="#b8b8b8"/><rect x="25.7" y="113.1" width="1.6" height="1" fill="#b8b8b8"/><rect x="7.9" y="127.1" width="1.6" height="1" fill="#b8b8b8"/><rect x="25.7" y="127.1" width="1.6" height="1" fill="#b8b8b8"/><rect x="7.9" y="141.3" width="1.6" height="1" fill="#b8b8b8"/><rect x="25.7" y="141.3" width="1.6" height="1" fill="#b8b8b8"/><rect x="7.9" y="169.3" width="1.6" height="1" fill="#b8b8b8"/><rect x="25.7" y="169.3" width="1.6" height="1" fill="#b8b8b8"/><rect x="7.9" y="183.2" width="1.6" height="1" fill="#b8b8b8"/><rect x="25.7" y="183.2" width="1.6" height="1" fill="#b8b8b8"/><rect x="7.9" y="197.0" width="1.6" height="1" fill="#b8b8b8"/><rect x="25.7" y="197.0" width="1.6" height="1" fill="#b8b8b8"/><rect x="7.9" y="210.5" width="1.6" height="1" fill="#b8b8b8"/><rect x="25.7" y="210.5" width="1.6" height="1" fill="#b8b8b8"/><rect x="7.9" y="237.9" width="1.6" height="1" fill="#b8b8b8"/><rect x="25.7" y="237.9" width="1.6" height="1" fill="#b8b8b8"/><rect x="7.9" y="251.8" width="1.6" height="1" fill="#b8b8b8"/><rect x="25.7" y="251.8" width="1.6" height="1" fill="#b8b8b8"/><rect x="7.9" y="265.7" width="1.6" height="1" fill="#b8b8b8"/><rect x="25.7" y="265.7" width="1.6" height="1" fill="#b8b8b8"/><rect x="7.9" y="305.9" width="1.6" height="1" fill="#b8b8b8"/><rect x="25.7" y="305.9" width="1.6" height="1" fill="#b8b8b8"/><rect x="7.9" y="319.5" width="1.6" height="1" fill="#b8b8b8"/><rect x="25.7" y="319.5" width="1.6" height="1" fill="#b8b8b8"/><rect x="7.9" y="332.9" width="1.6" height="1" fill="#b8b8b8"/><rect x="25.7" y="332.9" width="1.6" height="1" fill="#b8b8b8"/><rect x="7.9" y="346.0" width="1.6" height="1" fill="#b8b8b8"/><rect x="25.7" y="346.0" width="1.6" height="1" fill="#b8b8b8"/><rect x="7.9" y="372.6" width="1.6" height="1" fill="#b8b8b8"/><rect x="25.7" y="372.6" width="1.6" height="1" fill="#b8b8b8"/><rect x="7.9" y="385.8" width="1.6" height="1" fill="#b8b8b8"/><rect x="25.7" y="385.8" width="1.6" height="1" fill="#b8b8b8"/><rect x="7.9" y="398.5" width="1.6" height="1" fill="#b8b8b8"/><rect x="25.7" y="398.5" width="1.6" height="1" fill="#b8b8b8"/><rect x="7.9" y="411.5" width="1.6" height="1" fill="#b8b8b8"/><rect x="25.7" y="411.5" width="1.6" height="1" fill="#b8b8b8"/><rect x="6.5" y="29.3" width="7.9" height="1" fill="#a4a4a4"/><rect x="20.8" y="29.3" width="7.9" height="1" fill="#a4a4a4"/><text x="17.6" y="32.7" font-size="7.2" text-anchor="middle" fill="#d0d0d0" font-family="Liberation Sans, sans-serif">9</text><rect x="6.5" y="85.3" width="7.9" height="1" fill="#a4a4a4"/><rect x="20.8" y="85.3" width="7.9" height="1" fill="#a4a4a4"/><text x="17.6" y="88.7" font-size="7.2" text-anchor="middle" fill="#d0d0d0" font-family="Liberation Sans, sans-serif">6</text><rect x="6.5" y="155.8" width="7.9" height="1" fill="#a4a4a4"/><rect x="20.8" y="155.8" width="7.9" height="1" fill="#a4a4a4"/><text x="17.6" y="159.2" font-size="7.2" text-anchor="middle" fill="#d0d0d0" font-family="Liberation Sans, sans-serif">0</text><rect x="6.5" y="223.9" width="5.7" height="1" fill="#a4a4a4"/><rect x="23.0" y="223.9" width="5.7" height="1" fill="#a4a4a4"/><text x="17.6" y="227.3" font-size="7.2" text-anchor="middle" fill="#d0d0d0" font-family="Liberation Sans, sans-serif">-5</text><rect x="6.5" y="292.5" width="3.9" height="1" fill="#a4a4a4"/><rect x="24.8" y="292.5" width="3.9" height="1" fill="#a4a4a4"/><text x="17.6" y="295.9" font-size="7.2" text-anchor="middle" fill="#d0d0d0" font-family="Liberation Sans, sans-serif">-10</text><rect x="6.5" y="359.1" width="3.9" height="1" fill="#a4a4a4"/><rect x="24.8" y="359.1" width="3.9" height="1" fill="#a4a4a4"/><text x="17.6" y="362.5" font-size="7.2" text-anchor="middle" fill="#d0d0d0" font-family="Liberation Sans, sans-serif">-15</text><rect x="6.5" y="423.9" width="3.9" height="1" fill="#a4a4a4"/><rect x="24.8" y="423.9" width="3.9" height="1" fill="#a4a4a4"/><text x="17.6" y="427.3" font-size="7.2" text-anchor="middle" fill="#d0d0d0" font-family="Liberation Sans, sans-serif">-20</text><rect x="6.5" y="483.9" width="3.9" height="1" fill="#a4a4a4"/><rect x="24.8" y="483.9" width="3.9" height="1" fill="#a4a4a4"/><text x="17.6" y="487.3" font-size="7.2" text-anchor="middle" fill="#d0d0d0" font-family="Liberation Sans, sans-serif">-25</text><rect x="6.5" y="538.9" width="3.9" height="1" fill="#a4a4a4"/><rect x="24.8" y="538.9" width="3.9" height="1" fill="#a4a4a4"/><text x="17.6" y="542.3" font-size="7.2" text-anchor="middle" fill="#d0d0d0" font-family="Liberation Sans, sans-serif">-30</text><rect x="6.5" y="584.6" width="3.9" height="1" fill="#a4a4a4"/><rect x="24.8" y="584.6" width="3.9" height="1" fill="#a4a4a4"/><text x="17.6" y="588.0" font-size="7.2" text-anchor="middle" fill="#d0d0d0" font-family="Liberation Sans, sans-serif">-35</text><rect x="6.5" y="622.1" width="3.9" height="1" fill="#a4a4a4"/><rect x="24.8" y="622.1" width="3.9" height="1" fill="#a4a4a4"/><text x="17.6" y="625.5" font-size="7.2" text-anchor="middle" fill="#d0d0d0" font-family="Liberation Sans, sans-serif">-40</text><rect x="6.5" y="667.5" width="3.9" height="1" fill="#a4a4a4"/><rect x="24.8" y="667.5" width="3.9" height="1" fill="#a4a4a4"/><text x="17.6" y="670.9" font-size="7.2" text-anchor="middle" fill="#d0d0d0" font-family="Liberation Sans, sans-serif">-60</text><path d="M7.1 689.7v-2.2h21.0v2.2" stroke="#d0d0d0" stroke-width="1" fill="none"/><path d="M7.1 690.7v2h3M28.1 690.7v2h-3" stroke="#d0d0d0" stroke-width="0.9" fill="none" stroke-dasharray="1.2 0.8"/><text x="17.6" y="695.5" font-size="7.2" text-anchor="middle" fill="#d0d0d0" font-family="Liberation Sans, sans-serif">-70</text><text x="11.0" y="703.2" font-size="7.5" text-anchor="middle" fill="#f0f0f0" font-family="Liberation Sans, sans-serif">L</text><text x="24.2" y="703.2" font-size="7.5" text-anchor="middle" fill="#f0f0f0" font-family="Liberation Sans, sans-serif">R</text></svg>
<div class="b" style="left:1198.6px;top:593px;width:1.4px;height:233px;background:#9c9c9c;"></div>
<span class="t" style='font:bold 9px/12px "Liberation Sans", "Noto Sans CJK JP", sans-serif;color:#f4f4f4;top:826.40px;left:1160.00px;transform-origin:0 50%;transform:scaleX(0.8886);'>再生メータ</span>
<div class="b" style="left:1193px;top:826px;width:7px;height:12.5px;background:linear-gradient(90deg,rgba(73,73,73,0),#494949 70%);"></div>
<div class="b" style="left:1198px;top:826px;width:2px;height:12px;background:#333;"></div>
<div class="b" style="left:382px;top:280px;width:468px;height:246px;box-shadow:0 1px 6px 1px rgba(20,28,60,0.33);background:#46557a;"></div>
<div class="b" style="left:383px;top:281px;width:466px;height:244px;background:#ffffff;"></div>
<div class="b" style="left:385px;top:302px;width:462px;height:207px;background:#f0f0f0;"></div>
<div class="b" style="left:383px;top:509.3px;width:466px;height:15.7px;background:#474747;"></div>
<span class="t" style='font:normal 9px/12px "Liberation Sans", "Noto Sans CJK JP", sans-serif;color:#2a2a2a;top:286.00px;left:389.00px;transform-origin:0 50%;transform:scaleX(0.8014);'>ミックス/置換 -</span>
<span class="t" style='font:normal 9px/12px "Liberation Sans", "Noto Sans CJK JP", sans-serif;color:#2a2a2a;top:286.00px;left:440.00px;transform-origin:0 50%;transform:scaleX(0.8832);'>Track01_HareNochiKotori.wav</span>
<span class="t" style='font:normal 9px/12px "Liberation Sans", "Noto Sans CJK JP", sans-serif;color:#444;top:285.80px;left:797.99px;transform-origin:0 50%;-webkit-text-stroke:0;'>?</span>
<svg class="b" style="left:829px;top:287.8px;" width="7.6" height="7.6" viewBox="0 0 7.6 7.6"><path d="M0.4 0.4l6.8 6.8M7.2 0.4l-6.8 6.8" stroke="#333" stroke-width="0.85" fill="none"/></svg>
<span class="t" style='font:normal 9px/12px "Liberation Sans", "Noto Sans CJK JP", sans-serif;color:#1e1e1e;top:311.30px;left:387.50px;transform-origin:0 50%;'><span class="r" style="transform:scaleX(0.6342);margin-right:-16.47px">プリセット</span><span class="r" style="transform:scaleX(0.9300);margin-right:-1.05px">(R):</span></span>
<div class="b" style="left:442px;top:306.5px;width:249px;height:15.5px;background:#ffffff;border:1px solid #3b86d6;"></div>
<div class="b" style="left:445px;top:309px;width:25.5px;height:10px;background:#2f62b8;"></div>
<span class="t" style='font:normal 9px/12px "Liberation Sans", "Noto Sans CJK JP", sans-serif;color:#ffffff;top:308.00px;left:445.50px;transform-origin:0 50%;transform:scaleX(1.0202);'>(無題)</span>
<svg class="b" style="left:680px;top:311px;" width="8" height="6" viewBox="0 0 8 6"><path d="M0.8 1.2l3.2 3.2 3.2-3.2" stroke="#555" stroke-width="0.9" fill="none"/></svg>
<svg class="b" style="left:693px;top:308.5px;" width="11" height="11" viewBox="0 0 11 11"><rect x="0" y="0" width="11" height="11" fill="#2b6f9e"/><rect x="2.6" y="0" width="5.8" height="3.8" fill="#e8eef2"/><rect x="6" y="0.6" width="1.6" height="2.4" fill="#2b6f9e"/><rect x="2" y="6" width="7" height="5" fill="#f2f2f2"/><rect x="0" y="0" width="11" height="11" fill="none" stroke="#1d4f74" stroke-width="0.8"/></svg>
<svg class="b" style="left:710.5px;top:309px;" width="10.5" height="10.5" viewBox="0 0 10.5 10.5"><path d="M1.4 1.4l7.7 7.7M9.1 1.4l-7.7 7.7" stroke="#b3121a" stroke-width="2.4" fill="none"/></svg>
<div class="b" style="left:728.5px;top:307px;width:115.5px;height:15.3px;background:#e1e1e1;border:1.6px solid #2273cc;box-shadow:inset 0 0 0 1px #e8f2fc;"></div>
<span class="t" style='font:normal 9px/12px "Liberation Sans", "Noto Sans CJK JP", sans-serif;color:#1e1e1e;top:308.85px;left:774.25px;transform-origin:0 50%;transform:scaleX(0.9231);'>OK(O)</span>
<div class="b" style="left:728.5px;top:328.5px;width:115.5px;height:14.5px;background:#e1e1e1;border:1px solid #adadad;"></div>
<span class="t" style='font:normal 9px/12px "Liberation Sans", "Noto Sans CJK JP", sans-serif;color:#1e1e1e;top:329.95px;left:763.75px;transform-origin:0 50%;'><span class="r" style="transform:scaleX(0.7414);margin-right:-11.64px">キャンセル</span><span class="r" style="transform:scaleX(0.9300);margin-right:-0.87px">(C)</span></span>
<div class="b" style="left:728.5px;top:353px;width:115.5px;height:15px;background:#e1e1e1;border:1px solid #adadad;"></div>
<span class="t" style='font:normal 9px/12px "Liberation Sans", "Noto Sans CJK JP", sans-serif;color:#1e1e1e;top:354.70px;left:764.75px;transform-origin:0 50%;'><span class="r" style="transform:scaleX(0.7073);margin-right:-13.18px">プレビュー</span><span class="r" style="transform:scaleX(0.9300);margin-right:-0.84px">(P)</span></span>
<div class="b" style="left:728.5px;top:489px;width:115.5px;height:14.5px;background:#e1e1e1;border:1px solid #adadad;"></div>
<span class="t" style='font:normal 9px/12px "Liberation Sans", "Noto Sans CJK JP", sans-serif;color:#1e1e1e;top:490.45px;left:769.25px;transform-origin:0 50%;'><span class="r" style="transform:scaleX(0.8806);margin-right:-2.15px">詳細</span><span class="r" style="transform:scaleX(0.9300);margin-right:-1.36px">(E)...</span></span>
<div class="b" style="left:729px;top:376.5px;width:9px;height:9px;background:#ffffff;border:1px solid #333;"></div>
<span class="t" style='font:normal 9px/12px "Liberation Sans", "Noto Sans CJK JP", sans-serif;color:#1e1e1e;top:375.30px;left:739.50px;transform-origin:0 50%;'><span class="r" style="transform:scaleX(0.7352);margin-right:-9.49px">バイパス</span><span class="r" style="transform:scaleX(0.9300);margin-right:-0.84px">(B)</span></span>
<span class="t" style='font:normal 9px/12px "Liberation Sans", "Noto Sans CJK JP", sans-serif;color:#1e1e1e;top:464.70px;left:730.00px;transform-origin:0 50%;transform:scaleX(0.6906);'>右クリックでコンテキストメニューを表</span>
<span class="t" style='font:normal 9px/12px "Liberation Sans", "Noto Sans CJK JP", sans-serif;color:#1e1e1e;top:473.60px;left:777.50px;transform-origin:0 50%;transform:scaleX(1.0284);'>示...</span>
<div class="b" style="left:387px;top:332px;width:335.5px;height:171.5px;border:1px solid #d4d4d4;box-shadow:inset 1px 1px 0 #fdfdfd, 1px 1px 0 #fdfdfd;"></div>
<div class="b" style="left:395.5px;top:343px;width:157px;height:113.5px;border:1px solid #dcdcdc;"></div>
<div class="b" style="left:399.0px;top:338px;width:68.5px;height:10px;background:#f0f0f0;"></div>
<span class="t" style='font:normal 9px/12px "Liberation Sans", "Noto Sans CJK JP", sans-serif;color:#1e1e1e;top:336.70px;left:400.50px;transform-origin:0 50%;transform:scaleX(0.6924);'>ソース: クリップボード</span>
<div class="b" style="left:558.5px;top:343px;width:157.5px;height:114px;border:1px solid #dcdcdc;"></div>
<div class="b" style="left:563.0px;top:338px;width:132px;height:10px;background:#f0f0f0;"></div>
<span class="t" style='font:normal 9px/12px "Liberation Sans", "Noto Sans CJK JP", sans-serif;color:#1e1e1e;top:336.70px;left:564.50px;transform-origin:0 50%;transform:scaleX(0.8567);'>貼り付け先: Track01_HareNochiKot...</span>
<span class="t" style='font:normal 9px/12px "Liberation Sans", "Noto Sans CJK JP", sans-serif;color:#1e1e1e;top:345.90px;left:421.75px;transform-origin:0 50%;transform:scaleX(0.8540);'>0.00 dB</span>
<span class="t" style='font:normal 9px/12px "Liberation Sans", "Noto Sans CJK JP", sans-serif;color:#1e1e1e;top:354.00px;left:417.20px;transform-origin:0 50%;transform:scaleX(0.7994);'>(-100.00%)</span>
<div class="b" style="left:434px;top:384px;width:2px;height:44.5px;background:#8a8a8a;"></div>
<div class="b" style="left:430px;top:373px;width:10px;height:12.5px;border:1px solid #9a9a9a;border-radius:1.5px;background:linear-gradient(#fdfdfd,#d8d8d8 55%,#bdbdbd);"></div>
<div class="b" style="left:434.5px;top:371.5px;width:1px;height:2px;background:#aaa;"></div>
<span class="t" style='font:normal 9px/12px "Liberation Sans", "Noto Sans CJK JP", sans-serif;color:#1e1e1e;top:437.00px;left:418.50px;transform-origin:0 50%;transform:scaleX(0.6930);'>ボリューム</span>
<span class="t" style='font:normal 8px/12px "Liberation Sans", "Noto Sans CJK JP", sans-serif;color:#1e1e1e;top:444.70px;left:407.00px;transform-origin:0 50%;'><span class="r" style="transform:scaleX(1.1169);margin-right:1.29px">(-∞</span><span class="r" style="transform:scaleX(1.0500);margin-right:0.40px">～</span><span class="r" style="transform:scaleX(1.1169);margin-right:3.48px">6 dB)(V)</span></span>
<span class="t" style='font:normal 9px/12px "Liberation Sans", "Noto Sans CJK JP", sans-serif;color:#1e1e1e;top:345.90px;left:584.25px;transform-origin:0 50%;transform:scaleX(0.8540);'>0.00 dB</span>
<span class="t" style='font:normal 9px/12px "Liberation Sans", "Noto Sans CJK JP", sans-serif;color:#1e1e1e;top:354.00px;left:581.50px;transform-origin:0 50%;transform:scaleX(0.7705);'>(100.00%)</span>
<div class="b" style="left:596.5px;top:384px;width:2px;height:44.5px;background:#8a8a8a;"></div>
<div class="b" style="left:592.5px;top:373px;width:10px;height:12.5px;border:1px solid #9a9a9a;border-radius:1.5px;background:linear-gradient(#fdfdfd,#d8d8d8 55%,#bdbdbd);"></div>
<div class="b" style="left:597.0px;top:371.5px;width:1px;height:2px;background:#aaa;"></div>
<span class="t" style='font:normal 9px/12px "Liberation Sans", "Noto Sans CJK JP", sans-serif;color:#1e1e1e;top:437.00px;left:581.00px;transform-origin:0 50%;transform:scaleX(0.6930);'>ボリューム</span>
<span class="t" style='font:normal 8px/12px "Liberation Sans", "Noto Sans CJK JP", sans-serif;color:#1e1e1e;top:444.70px;left:569.50px;transform-origin:0 50%;'><span class="r" style="transform:scaleX(1.1418);margin-right:1.56px">(-∞</span><span class="r" style="transform:scaleX(1.0500);margin-right:0.40px">～</span><span class="r" style="transform:scaleX(1.1418);margin-right:4.10px">6 dB)(L)</span></span>
<span class="t" style='font:normal 9px/12px "Liberation Sans", "Noto Sans CJK JP", sans-serif;color:#1e1e1e;top:381.00px;left:457.50px;transform-origin:0 50%;transform:scaleX(0.9498);'>開始:</span>
<span class="t" style='font:normal 9px/12px "Liberation Sans", "Noto Sans CJK JP", sans-serif;color:#1e1e1e;top:391.70px;left:457.50px;transform-origin:0 50%;transform:scaleX(0.9498);'>終了:</span>
<span class="t" style='font:normal 9px/12px "Liberation Sans", "Noto Sans CJK JP", sans-serif;color:#1e1e1e;top:403.40px;left:457.50px;transform-origin:0 50%;transform:scaleX(0.7407);'>チャンネル:</span>
<span class="t" style='font:normal 9px/12px "Liberation Sans", "Noto Sans CJK JP", sans-serif;color:#1e1e1e;top:380.50px;left:505.20px;transform-origin:0 50%;transform:scaleX(0.7990);'>00:00:00.000</span>
<span class="t" style='font:normal 9px/12px "Liberation Sans", "Noto Sans CJK JP", sans-serif;color:#1e1e1e;top:391.60px;left:505.20px;transform-origin:0 50%;transform:scaleX(0.7990);'>00:00:28.546</span>
<span class="t" style='font:normal 9px/12px "Liberation Sans", "Noto Sans CJK JP", sans-serif;color:#1e1e1e;top:403.40px;left:534.70px;transform-origin:0 50%;transform:scaleX(0.9604);'>1-2</span>
<span class="t" style='font:normal 9px/12px "Liberation Sans", "Noto Sans CJK JP", sans-serif;color:#1e1e1e;top:381.00px;left:621.20px;transform-origin:0 50%;transform:scaleX(0.9498);'>開始:</span>
<span class="t" style='font:normal 9px/12px "Liberation Sans", "Noto Sans CJK JP", sans-serif;color:#1e1e1e;top:391.70px;left:621.20px;transform-origin:0 50%;transform:scaleX(0.9498);'>終了:</span>
<span class="t" style='font:normal 9px/12px "Liberation Sans", "Noto Sans CJK JP", sans-serif;color:#1e1e1e;top:403.40px;left:621.20px;transform-origin:0 50%;transform:scaleX(0.7407);'>チャンネル:</span>
<span class="t" style='font:normal 9px/12px "Liberation Sans", "Noto Sans CJK JP", sans-serif;color:#1e1e1e;top:380.50px;left:668.90px;transform-origin:0 50%;transform:scaleX(0.7990);'>00:00:00.000</span>
<span class="t" style='font:normal 9px/12px "Liberation Sans", "Noto Sans CJK JP", sans-serif;color:#1e1e1e;top:391.60px;left:668.90px;transform-origin:0 50%;transform:scaleX(0.7990);'>00:00:28.546</span>
<span class="t" style='font:normal 9px/12px "Liberation Sans", "Noto Sans CJK JP", sans-serif;color:#1e1e1e;top:403.40px;left:698.40px;transform-origin:0 50%;transform:scaleX(0.9604);'>1-2</span>
<div class="b" style="left:473.8px;top:442px;width:9px;height:9px;background:#ffffff;border:1px solid #333;"></div>
<svg class="b" style="left:473.8px;top:442px;" width="9" height="9" viewBox="0 0 9 9"><path d="M1.8 4.6l2 2 3.4-4" stroke="#222" stroke-width="1" fill="none"/></svg>
<span class="t" style='font:normal 9px/12px "Liberation Sans", "Noto Sans CJK JP", sans-serif;color:#1e1e1e;top:440.60px;left:485.00px;transform-origin:0 50%;'><span class="r" style="transform:scaleX(0.8116);margin-right:-10.18px">データの反転</span><span class="r" style="transform:scaleX(0.9300);margin-right:-0.84px">(A)</span></span>
<div class="b" style="left:637.8px;top:442px;width:9px;height:9px;background:#ffffff;border:1px solid #333;"></div>
<span class="t" style='font:normal 9px/12px "Liberation Sans", "Noto Sans CJK JP", sans-serif;color:#1e1e1e;top:440.80px;left:649.00px;transform-origin:0 50%;'><span class="r" style="transform:scaleX(0.7938);margin-right:-11.14px">データの反転</span><span class="r" style="transform:scaleX(0.9300);margin-right:-0.87px">(D)</span></span>
<span class="t" style='font:normal 9px/12px "Liberation Sans", "Noto Sans CJK JP", sans-serif;color:#1e1e1e;top:467.80px;left:397.00px;transform-origin:0 50%;'><span class="r" style="transform:scaleX(0.6742);margin-right:-11.73px">フェード</span><span class="r" style="transform:scaleX(0.9300);margin-right:-0.18px"> </span><span class="r" style="transform:scaleX(0.6742);margin-right:-5.87px">イン</span><span class="r" style="transform:scaleX(0.9300);margin-right:-0.77px">(I):</span></span>
<span class="t" style='font:normal 9px/12px "Liberation Sans", "Noto Sans CJK JP", sans-serif;color:#1e1e1e;top:484.00px;left:397.00px;transform-origin:0 50%;'><span class="r" style="transform:scaleX(0.6617);margin-right:-12.18px">フェード</span><span class="r" style="transform:scaleX(0.9300);margin-right:-0.18px"> </span><span class="r" style="transform:scaleX(0.6617);margin-right:-9.14px">アウト</span><span class="r" style="transform:scaleX(0.9300);margin-right:-1.05px">(U):</span></span>
<div class="b" style="left:466px;top:467px;width:57px;height:13.6px;background:#ffffff;border:1px solid #8e8e8e;"></div>
<span class="t" style='font:normal 9px/12px "Liberation Sans", "Noto Sans CJK JP", sans-serif;color:#1e1e1e;top:467.90px;left:478.70px;transform-origin:0 50%;transform:scaleX(0.7800);'>00:00:00.000</span>
<div class="b" style="left:523.7px;top:467.5px;width:6.6px;height:12.8px;background:#dedede;"></div>
<svg class="b" style="left:523.7px;top:467.5px;" width="6.6" height="12.8" viewBox="0 0 6.6 12.8"><polygon points="1.3,4.6 3.3,2 5.3,4.6" fill="#111"/><polygon points="1.3,8.6 3.3,11.2 5.3,8.6" fill="#111"/></svg>
<div class="b" style="left:535px;top:467.5px;width:36px;height:13px;background:#f2f2f2;border:1px solid #c4c4c4;"></div>
<svg class="b" style="left:538px;top:469.5px;" width="30" height="9" viewBox="0 0 30 9"><path d="M0.5 0.5h23.5v8h-23.5zM0.5 0.5C9 1 15 8 24 8.5M0.5 8.5C9 8 15 1 24 0.5" stroke="#444" stroke-width="0.8" fill="none"/><rect x="26.5" y="3.6" width="1.4" height="1.4" fill="#222"/></svg>
<div class="b" style="left:466px;top:484px;width:57px;height:13.6px;background:#ffffff;border:1px solid #8e8e8e;"></div>
<span class="t" style='font:normal 9px/12px "Liberation Sans", "Noto Sans CJK JP", sans-serif;color:#1e1e1e;top:484.90px;left:478.70px;transform-origin:0 50%;transform:scaleX(0.7800);'>00:00:00.000</span>
<div class="b" style="left:523.7px;top:484.5px;width:6.6px;height:12.8px;background:#dedede;"></div>
<svg class="b" style="left:523.7px;top:484.5px;" width="6.6" height="12.8" viewBox="0 0 6.6 12.8"><polygon points="1.3,4.6 3.3,2 5.3,4.6" fill="#111"/><polygon points="1.3,8.6 3.3,11.2 5.3,8.6" fill="#111"/></svg>
<div class="b" style="left:535px;top:484.5px;width:36px;height:13px;background:#f2f2f2;border:1px solid #c4c4c4;"></div>
<svg class="b" style="left:538px;top:486.5px;" width="30" height="9" viewBox="0 0 30 9"><path d="M0.5 0.5h23.5v8h-23.5zM0.5 0.5C9 1 15 8 24 8.5M0.5 8.5C9 8 15 1 24 0.5" stroke="#444" stroke-width="0.8" fill="none"/><rect x="26.5" y="3.6" width="1.4" height="1.4" fill="#222"/></svg>
<div class="b" style="left:576.7px;top:468.6px;width:9px;height:9px;background:#ffffff;border:1px solid #333;"></div>
<span class="t" style='font:normal 9px/12px "Liberation Sans", "Noto Sans CJK JP", sans-serif;color:#1e1e1e;top:467.30px;left:588.20px;transform-origin:0 50%;'><span class="r" style="transform:scaleX(0.7101);margin-right:-20.83px">プロポーショナル</span><span class="r" style="transform:scaleX(0.9300);margin-right:-0.18px"> </span><span class="r" style="transform:scaleX(0.7101);margin-right:-13.05px">フェード長</span><span class="r" style="transform:scaleX(0.9300);margin-right:-0.80px">(F)</span></span>
<span class="t" style='font:normal 9px/12px "Liberation Sans", "Noto Sans CJK JP", sans-serif;color:#1e1e1e;top:484.00px;left:577.00px;transform-origin:0 50%;transform:scaleX(0.7356);'>合計ミックス長:</span>
<span class="t" style='font:normal 9px/12px "Liberation Sans", "Noto Sans CJK JP", sans-serif;color:#1e1e1e;top:484.00px;left:671.00px;transform-origin:0 50%;transform:scaleX(0.7895);'>00:00:28.546</span>
<span class="t" style='font:normal 9px/12px "Liberation Sans", "Noto Sans CJK JP", sans-serif;color:#dcdcdc;top:511.60px;left:387.00px;transform-origin:0 50%;transform:scaleX(0.9148);-webkit-text-stroke:0.4px;'>CPU %</span>
<span class="t" style='font:normal 9px/12px "Liberation Sans", "Noto Sans CJK JP", sans-serif;color:#dcdcdc;top:511.60px;left:667.50px;transform-origin:0 50%;transform:scaleX(0.9950);-webkit-text-stroke:0.4px;'>00:00:00.000</span>
<span class="t" style='font:normal 9px/12px "Liberation Sans", "Noto Sans CJK JP", sans-serif;color:#dcdcdc;top:511.60px;left:729.30px;transform-origin:0 50%;transform:scaleX(0.9893);-webkit-text-stroke:0.4px;'>00:00:28.546</span>
<span class="t" style='font:normal 9px/12px "Liberation Sans", "Noto Sans CJK JP", sans-serif;color:#dcdcdc;top:511.60px;left:791.00px;transform-origin:0 50%;transform:scaleX(0.9893);-webkit-text-stroke:0.4px;'>00:00:28.546</span>
<div class="b" style="left:0px;top:0px;width:1px;height:860px;background:#8a8a8e;"></div>
</div>
</body></html>
